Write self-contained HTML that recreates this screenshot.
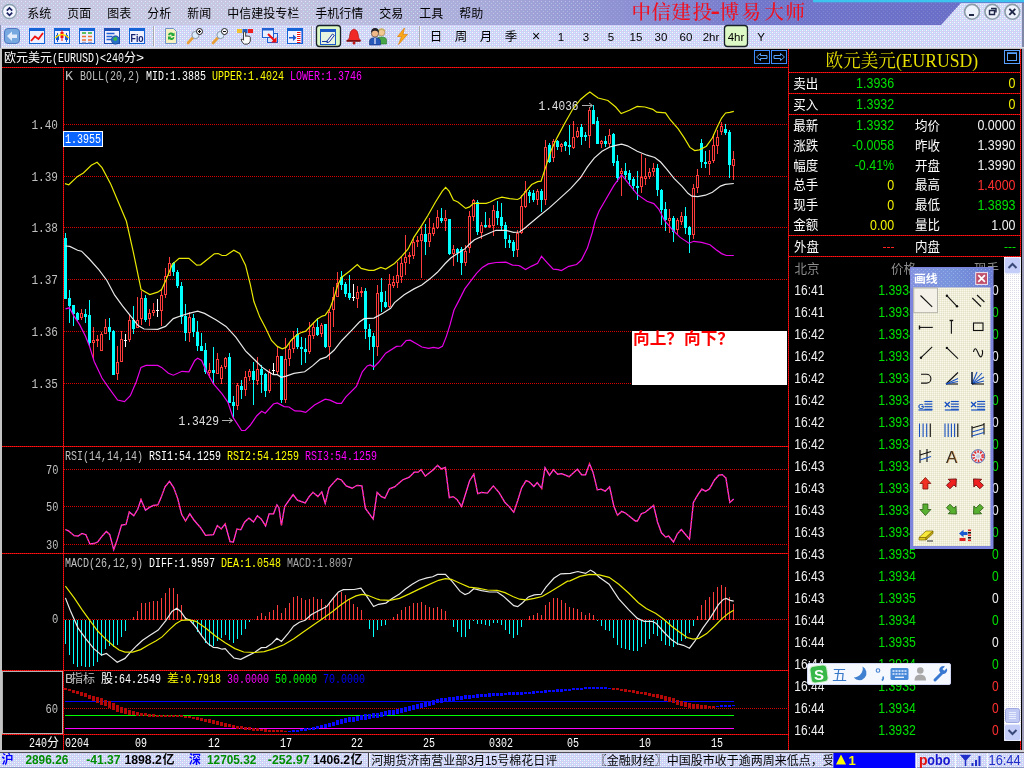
<!DOCTYPE html>
<html lang="zh-CN"><head><meta charset="utf-8"><title>中信建投-博易大师</title>
<style>
html,body{margin:0;padding:0;background:#000;overflow:hidden}
body{width:1024px;height:768px;position:relative}
svg{position:absolute;left:0;top:0;display:block;will-change:transform}
text{white-space:pre}
</style></head><body>
<svg width="1024" height="768" viewBox="0 0 1024 768">
<defs>
<linearGradient id="gt" x1="0" y1="0" x2="1" y2="0"><stop offset="0.26" stop-color="#c7c7e1"/><stop offset="0.5" stop-color="#a3a5d8"/><stop offset="0.74" stop-color="#7377cb"/><stop offset="1" stop-color="#676bc6"/></linearGradient>
<pattern id="dots4" width="4" height="4" patternUnits="userSpaceOnUse"><rect x="1" y="1" width="1" height="1" fill="#ffffff"/><rect x="3" y="3" width="1" height="1" fill="#c8ffff"/></pattern>
<pattern id="dots2" width="4" height="4" patternUnits="userSpaceOnUse"><rect x="0" y="0" width="1" height="1" fill="#ffffff"/><rect x="2" y="2" width="1" height="1" fill="#ffffff"/><rect x="2" y="0" width="1" height="1" fill="#c8ffff"/><rect x="0" y="2" width="1" height="1" fill="#c8ffff"/></pattern>
<pattern id="dotsw" width="2" height="2" patternUnits="userSpaceOnUse"><rect x="0" y="0" width="1" height="1" fill="#dcdce8"/></pattern>
<pattern id="dotsb" width="2" height="2" patternUnits="userSpaceOnUse"><rect x="0" y="0" width="1" height="1" fill="#ffffff"/><rect x="1" y="1" width="1" height="1" fill="#d8d4c0"/></pattern>
<linearGradient id="gtb" x1="0" y1="0" x2="1" y2="0"><stop offset="0" stop-color="#8492e0"/><stop offset="0.5" stop-color="#7894dc"/><stop offset="1" stop-color="#6c7cd4"/></linearGradient>
</defs>
<rect x="0" y="0" width="1024" height="25" fill="url(#gt)"/>
<rect x="0" y="0" width="430" height="25" fill="url(#dots4)" opacity="0.55"/>
<rect x="430" y="0" width="170" height="25" fill="url(#dots4)" opacity="0.35"/>
<rect x="600" y="0" width="424" height="25" fill="url(#dots4)" opacity="0.15"/>
<polygon points="941,25 961,3 1024,3 1024,25" fill="#d3d3f5"/>
<rect x="0" y="25" width="1024" height="23" fill="#d0d0f6"/>
<rect x="0" y="25" width="1024" height="23" fill="url(#dots2)" opacity="0.8"/>
<polygon points="941,25 961,3 1024,3 1024,25" fill="url(#dots2)" opacity="0.8"/>
<rect x="813" y="0" width="211" height="2.3" fill="#3cc4ee"/>
<rect x="1022" y="3" width="2" height="45" fill="#8088a8"/>
<rect x="0" y="47" width="1024" height="1" fill="#dcdce6"/>
<rect x="0" y="48" width="1024" height="1" fill="#c4c4c8"/>
<circle cx="9.5" cy="11.5" r="7" fill="#f4f6ff" stroke="#8aa0b0" stroke-width="1.3"/>
<path d="M6.8 10.6 L9.5 7.9 L12.2 10.6 M6.8 12.6 L9.5 15.3 L12.2 12.6" fill="none" stroke="#182060" stroke-width="1.7"/>
<rect x="0" y="25" width="1" height="23" fill="#8890b0"/>
<text x="27.3" y="17.5" fill="#000" font-size="12" font-family='"Liberation Sans","Noto Sans CJK SC",sans-serif' textLength="24" lengthAdjust="spacingAndGlyphs">系统</text>
<text x="67.3" y="17.5" fill="#000" font-size="12" font-family='"Liberation Sans","Noto Sans CJK SC",sans-serif' textLength="24" lengthAdjust="spacingAndGlyphs">页面</text>
<text x="107.3" y="17.5" fill="#000" font-size="12" font-family='"Liberation Sans","Noto Sans CJK SC",sans-serif' textLength="24" lengthAdjust="spacingAndGlyphs">图表</text>
<text x="147.3" y="17.5" fill="#000" font-size="12" font-family='"Liberation Sans","Noto Sans CJK SC",sans-serif' textLength="24" lengthAdjust="spacingAndGlyphs">分析</text>
<text x="187.3" y="17.5" fill="#000" font-size="12" font-family='"Liberation Sans","Noto Sans CJK SC",sans-serif' textLength="24" lengthAdjust="spacingAndGlyphs">新闻</text>
<text x="227.3" y="17.5" fill="#000" font-size="12" font-family='"Liberation Sans","Noto Sans CJK SC",sans-serif' textLength="72" lengthAdjust="spacingAndGlyphs">中信建投专栏</text>
<text x="315.3" y="17.5" fill="#000" font-size="12" font-family='"Liberation Sans","Noto Sans CJK SC",sans-serif' textLength="48" lengthAdjust="spacingAndGlyphs">手机行情</text>
<text x="379.3" y="17.5" fill="#000" font-size="12" font-family='"Liberation Sans","Noto Sans CJK SC",sans-serif' textLength="24" lengthAdjust="spacingAndGlyphs">交易</text>
<text x="419.3" y="17.5" fill="#000" font-size="12" font-family='"Liberation Sans","Noto Sans CJK SC",sans-serif' textLength="24" lengthAdjust="spacingAndGlyphs">工具</text>
<text x="459.3" y="17.5" fill="#000" font-size="12" font-family='"Liberation Sans","Noto Sans CJK SC",sans-serif' textLength="24" lengthAdjust="spacingAndGlyphs">帮助</text>
<text x="631.5" y="19.3" fill="#f01020" font-size="19.5" font-family='"Liberation Serif","Noto Serif CJK SC",serif' font-weight="500">中</text>
<text x="651.5" y="19.3" fill="#f01020" font-size="19.5" font-family='"Liberation Serif","Noto Serif CJK SC",serif' font-weight="500">信</text>
<text x="671.5" y="19.3" fill="#f01020" font-size="19.5" font-family='"Liberation Serif","Noto Serif CJK SC",serif' font-weight="500">建</text>
<text x="692.5" y="19.3" fill="#f01020" font-size="19.5" font-family='"Liberation Serif","Noto Serif CJK SC",serif' font-weight="500">投</text>
<text x="719.5" y="19.3" fill="#f01020" font-size="19.5" font-family='"Liberation Serif","Noto Serif CJK SC",serif' font-weight="500">博</text>
<text x="741.5" y="19.3" fill="#f01020" font-size="19.5" font-family='"Liberation Serif","Noto Serif CJK SC",serif' font-weight="500">易</text>
<text x="764.5" y="19.3" fill="#f01020" font-size="19.5" font-family='"Liberation Serif","Noto Serif CJK SC",serif' font-weight="500">大</text>
<text x="785.5" y="19.3" fill="#f01020" font-size="19.5" font-family='"Liberation Serif","Noto Serif CJK SC",serif' font-weight="500">师</text>
<text x="710.5" y="17.6" fill="#f01020" font-size="20" font-family='"Liberation Sans","Noto Sans CJK SC",sans-serif' font-weight="bold" textLength="9.5" lengthAdjust="spacingAndGlyphs">-</text>
<circle cx="972" cy="11.8" r="7.4" fill="#eef2fc" stroke="#8c9ca8" stroke-width="1.6"/>
<circle cx="992.3" cy="11.8" r="7.4" fill="#eef2fc" stroke="#8c9ca8" stroke-width="1.6"/>
<circle cx="1012.3" cy="11.8" r="7.4" fill="#eef2fc" stroke="#8c9ca8" stroke-width="1.6"/>
<rect x="969" y="14" width="5" height="2" fill="#202848"/>
<path d="M989.5 10.5h5v4h-5z M991 8.5h5v4" fill="none" stroke="#202848" stroke-width="1.4"/>
<path d="M1009.3 8.8l6 6M1015.3 8.8l-6 6" stroke="#202848" stroke-width="1.9"/>
<rect x="4.5" y="28.5" width="15" height="15" rx="3.5" fill="#78a8e0" stroke="#5078c0"/>
<path d="M7 36l5-4.5v3h5v3.5h-5v3z" fill="#e4ecfc"/>
<rect x="29.5" y="28.5" width="15" height="15" fill="#eef0ff" stroke="#1464d8"/>
<rect x="29" y="28" width="16" height="3" fill="#1464d8"/>
<polyline points="31,41 35,36.5 38.5,39 43,33" fill="none" stroke="#f01010" stroke-width="1.8"/>
<rect x="54.5" y="28.5" width="15" height="15" fill="#eef0ff" stroke="#1464d8"/>
<rect x="54" y="28" width="16" height="3" fill="#1464d8"/>
<path d="M57.5 33v9M66.5 33v9" stroke="#1858d0" stroke-width="1"/><rect x="56" y="35" width="3" height="5" fill="#1858d0"/><rect x="65" y="35" width="3" height="5" fill="#1858d0"/>
<path d="M62 30v11" stroke="#f01010"/><rect x="60.5" y="32" width="3" height="6" fill="#f01010"/>
<path d="M55 38q7-7 14 0" fill="none" stroke="#f8e000" stroke-width="1.2"/>
<rect x="79.5" y="28.5" width="15" height="15" fill="#eef0ff" stroke="#1464d8"/>
<rect x="79" y="28" width="16" height="3" fill="#1464d8"/>
<path d="M82 33h4M88 33h4" stroke="#30b030" stroke-width="1.3"/>
<path d="M82 36.5h4M88 36.5h4" stroke="#f07030" stroke-width="1.3"/>
<path d="M82 40h4M88 40h4" stroke="#f07030" stroke-width="1.3"/>
<path d="M82 42.5h4M88 42.5h4" stroke="#a0a0c0" stroke-width="1.3"/>
<rect x="104.5" y="28.5" width="15" height="15" fill="#f0f0ff" stroke="#1a50b8"/>
<rect x="104" y="28" width="16" height="3" fill="#1a50b8"/>
<path d="M106.5 33.5h8M106.5 36.5h6M106.5 39.5h5" stroke="#2060d0" stroke-width="1.6"/>
<circle cx="115.5" cy="40" r="4.2" fill="#2870c8" stroke="#103880" stroke-width="0.6"/><path d="M113 39q2-3 4-1.5q1 2-1 3.5q-2 0.5-3-2z" fill="#38b848"/>
<rect x="129.5" y="28.5" width="15" height="15" fill="#eef0ff" stroke="#1464d8"/>
<rect x="129" y="28" width="16" height="3" fill="#1464d8"/>
<text x="130.6" y="41.5" fill="#102070" font-size="10" font-family='"Liberation Sans","Noto Sans CJK SC",sans-serif' font-weight="bold" textLength="13" lengthAdjust="spacingAndGlyphs">Fio</text>
<line x1="153.5" y1="26" x2="153.5" y2="46" stroke="#a8a8b0" stroke-width="1" shape-rendering="crispEdges"/>
<line x1="154.5" y1="26" x2="154.5" y2="46" stroke="#f8f8ff" stroke-width="1" shape-rendering="crispEdges"/>
<path d="M165.5 28.5h8l3 3v12h-11z" fill="#f4f0c0" stroke="#7090c8"/>
<path d="M168 35a3.2 3.2 0 0 1 5.5-1.5l1-1v3.5h-3.5l1-1a1.8 1.8 0 0 0-2.6 0.6zM174.5 37.5a3.2 3.2 0 0 1-5.5 1.5l-1 1v-3.5h3.5l-1 1a1.8 1.8 0 0 0 2.6-0.6z" fill="#20a838"/>
<path d="M188 43l5.5-6" stroke="#e8a038" stroke-width="2.6" stroke-linecap="round"/>
<circle cx="195.5" cy="35" r="3.6" fill="#dcecff" stroke="#8898a8" stroke-width="1"/>
<circle cx="199.5" cy="31.5" r="3" fill="#f8f8ff" stroke="#202020" stroke-width="1"/>
<path d="M198 31.5h3M199.5 30v3" stroke="#101010" stroke-width="1"/>
<path d="M213 43l5.5-6" stroke="#e8a038" stroke-width="2.6" stroke-linecap="round"/>
<circle cx="220.5" cy="35" r="3.6" fill="#dcecff" stroke="#8898a8" stroke-width="1"/>
<circle cx="224.5" cy="31.5" r="3" fill="#f8f8ff" stroke="#202020" stroke-width="1"/>
<path d="M223 31.5h3" stroke="#101010" stroke-width="1"/>
<rect x="237" y="29" width="5" height="4" fill="#f0c030"/><rect x="242.5" y="29" width="5" height="4" fill="#2060c0"/><rect x="248" y="29" width="5" height="4" fill="#f02020"/>
<path d="M243.5 32.5q1.2-1.5 2.2 0v4l1.2-0.6 1.2 0.4 1.2-0.2 1 1v4q-0.5 2.5-3 3h-3q-2-1-3.3-4.5l1.3-0.6 1.2 1.2z" fill="#fcfcfc" stroke="#282828" stroke-width="0.9"/>
<rect x="267.5" y="33.5" width="10" height="9" fill="#d8e4fc" stroke="#2060d0"/>
<rect x="262.5" y="28.5" width="11" height="9" fill="#e8f0ff" stroke="#2060d0"/><rect x="262" y="28" width="12" height="2.5" fill="#2060d0"/>
<path d="M268 34l6.5 6.5" stroke="#f01010" stroke-width="2"/><path d="M276.5 42.5h-5.5l5.5-5.5z" fill="#f01010"/>
<rect x="287.5" y="28.5" width="15" height="15" fill="#eef0ff" stroke="#1464d8"/>
<rect x="287" y="28" width="16" height="3" fill="#1464d8"/>
<rect x="296.5" y="31" width="4" height="12" fill="#fff"/><path d="M301.5 31.5v11.5" stroke="#2040e0" stroke-dasharray="1 1"/>
<path d="M297 32.5h3.5M297 34.5h3.5M297 36.5h3.5M297 38.5h3.5M297 40.5h3.5M297 42.5h3.5" stroke="#f01010" stroke-width="1"/>
<path d="M289 37h4v-2.5l3.5 3.2-3.5 3.2v-2.5h-4z" fill="#1858d0"/>
<line x1="311.5" y1="26" x2="311.5" y2="46" stroke="#a8a8b0" stroke-width="1" shape-rendering="crispEdges"/>
<line x1="312.5" y1="26" x2="312.5" y2="46" stroke="#f8f8ff" stroke-width="1" shape-rendering="crispEdges"/>
<rect x="316.5" y="25.5" width="24" height="21" rx="3" fill="#dcf8c4" stroke="#182028" stroke-width="1.3"/>
<rect x="320.5" y="29.5" width="15" height="15" fill="#e8f4e0" stroke="#1a58c8"/>
<rect x="320.0" y="29" width="16" height="3" fill="#1a58c8"/>
<path d="M322 41.5h4.5l1.5-1" fill="none" stroke="#1838a0" stroke-width="1.2"/><path d="M327.5 40.5l5-6.5 1.8 1.4-5 6.5-2.4 0.8z" fill="#f8f8ff" stroke="#1838a0" stroke-width="1"/>
<path d="M353 29.5q1-1.2 2 0q3 1 3.3 5.5l0.4 3 2 2.5h-13.4l2-2.5 0.4-3q0.3-4.5 3.3-5.5z" fill="#f02828" stroke="#a01010" stroke-width="0.6"/><rect x="346.5" y="40" width="14" height="1.8" fill="#801010"/><circle cx="354" cy="43" r="1.5" fill="#c01818"/>
<circle cx="381.5" cy="32.5" r="3.4" fill="#f0c890" stroke="#a08050" stroke-width="0.6"/><path d="M376.5 44v-4q0-3 5-3t5 3v4z" fill="#48a848" stroke="#287028" stroke-width="0.6"/><path d="M378 31q3.5-4 7 0" fill="none" stroke="#c8b060" stroke-width="1.6"/>
<circle cx="375" cy="33.5" r="3.6" fill="#f0b888" stroke="#303030" stroke-width="0.6"/><path d="M371 33q0-5 4-5t4 5q-1-2.5-4-2.5t-4 2.5z" fill="#202028"/><path d="M369.5 45v-4q0-3.2 5.5-3.2t5.5 3.2v4z" fill="#2858b8" stroke="#183878" stroke-width="0.6"/><path d="M375 38v6" stroke="#f0f0ff" stroke-width="1.2"/>
<path d="M404.5 28l-7 8.5h4l-3 8 9-10h-4.5z" fill="#f8a818" stroke="#e08008" stroke-width="0.7"/>
<line x1="419.5" y1="26" x2="419.5" y2="46" stroke="#a8a8b0" stroke-width="1" shape-rendering="crispEdges"/>
<line x1="420.5" y1="26" x2="420.5" y2="46" stroke="#f8f8ff" stroke-width="1" shape-rendering="crispEdges"/>
<rect x="724.5" y="25.5" width="23" height="21" rx="3" fill="#dcf8c4" stroke="#182028" stroke-width="1.3"/>
<text x="436" y="41" fill="#000" font-size="12.5" font-family='"Liberation Sans","Noto Sans CJK SC",sans-serif' text-anchor="middle">日</text>
<text x="461" y="41" fill="#000" font-size="12.5" font-family='"Liberation Sans","Noto Sans CJK SC",sans-serif' text-anchor="middle">周</text>
<text x="486" y="41" fill="#000" font-size="12.5" font-family='"Liberation Sans","Noto Sans CJK SC",sans-serif' text-anchor="middle">月</text>
<text x="511" y="41" fill="#000" font-size="12.5" font-family='"Liberation Sans","Noto Sans CJK SC",sans-serif' text-anchor="middle">季</text>
<text x="536" y="41" fill="#000" font-size="14" font-family='"Liberation Sans","Noto Sans CJK SC",sans-serif' text-anchor="middle">×</text>
<text x="561" y="40.5" fill="#000" font-size="11.5" font-family='"Liberation Sans","Noto Sans CJK SC",sans-serif' text-anchor="middle">1</text>
<text x="586" y="40.5" fill="#000" font-size="11.5" font-family='"Liberation Sans","Noto Sans CJK SC",sans-serif' text-anchor="middle">3</text>
<text x="611" y="40.5" fill="#000" font-size="11.5" font-family='"Liberation Sans","Noto Sans CJK SC",sans-serif' text-anchor="middle">5</text>
<text x="636" y="40.5" fill="#000" font-size="11.5" font-family='"Liberation Sans","Noto Sans CJK SC",sans-serif' text-anchor="middle">15</text>
<text x="661" y="40.5" fill="#000" font-size="11.5" font-family='"Liberation Sans","Noto Sans CJK SC",sans-serif' text-anchor="middle">30</text>
<text x="686" y="40.5" fill="#000" font-size="11.5" font-family='"Liberation Sans","Noto Sans CJK SC",sans-serif' text-anchor="middle">60</text>
<text x="711" y="40.5" fill="#000" font-size="11.5" font-family='"Liberation Sans","Noto Sans CJK SC",sans-serif' text-anchor="middle">2hr</text>
<text x="736" y="40.5" fill="#000" font-size="11.5" font-family='"Liberation Sans","Noto Sans CJK SC",sans-serif' text-anchor="middle">4hr</text>
<text x="761" y="40.5" fill="#000" font-size="11.5" font-family='"Liberation Sans","Noto Sans CJK SC",sans-serif' text-anchor="middle">Y</text>
<rect x="0" y="49" width="1024" height="701" fill="#000"/>
<rect x="0" y="49" width="2" height="701" fill="#c4c4c4"/>
<text x="4" y="62" fill="#fff" font-size="12" font-family='"Liberation Sans","Noto Sans CJK SC",sans-serif' textLength="48" lengthAdjust="spacingAndGlyphs">欧元美元</text>
<text x="52" y="62" fill="#fff" font-size="13.5" font-family='"Liberation Mono","Noto Sans CJK SC",monospace' textLength="72" lengthAdjust="spacingAndGlyphs">(EURUSD)&lt;240</text>
<text x="124" y="62" fill="#fff" font-size="12" font-family='"Liberation Sans","Noto Sans CJK SC",sans-serif'>分</text>
<text x="136" y="62" fill="#fff" font-size="13.5" font-family='"Liberation Mono","Noto Sans CJK SC",monospace'>&gt;</text>
<rect x="754.5" y="50.5" width="15" height="13" fill="none" stroke="#3c8cff" shape-rendering="crispEdges"/>
<path d="M756.5 57l4-3.5v2h6.5v3h-6.5v2z" fill="none" stroke="#58a4ff" stroke-width="1"/>
<rect x="771.5" y="50.5" width="15" height="13" fill="none" stroke="#3c8cff" shape-rendering="crispEdges"/>
<path d="M784.5 57l-4-3.5v2h-6.5v3h6.5v2z" fill="none" stroke="#58a4ff" stroke-width="1"/>
<line x1="2" y1="67.5" x2="789" y2="67.5" stroke="#c40000" stroke-width="1" shape-rendering="crispEdges"/>
<line x1="2" y1="446.5" x2="789" y2="446.5" stroke="#c40000" stroke-width="1" shape-rendering="crispEdges"/>
<line x1="2" y1="553.5" x2="789" y2="553.5" stroke="#c40000" stroke-width="1" shape-rendering="crispEdges"/>
<line x1="2" y1="670.5" x2="789" y2="670.5" stroke="#c40000" stroke-width="1" shape-rendering="crispEdges"/>
<line x1="2" y1="734.5" x2="789" y2="734.5" stroke="#c40000" stroke-width="1" shape-rendering="crispEdges"/>
<line x1="63.5" y1="67" x2="63.5" y2="750" stroke="#c40000" stroke-width="1" shape-rendering="crispEdges"/>
<line x1="788.5" y1="49" x2="788.5" y2="750" stroke="#c40000" stroke-width="1" shape-rendering="crispEdges"/>
<line x1="2" y1="67.5" x2="789" y2="67.5" stroke="#ff1818" stroke-width="1" stroke-dasharray="1 1" shape-rendering="crispEdges"/>
<line x1="2" y1="446.5" x2="789" y2="446.5" stroke="#ff1818" stroke-width="1" stroke-dasharray="1 1" shape-rendering="crispEdges"/>
<line x1="2" y1="553.5" x2="789" y2="553.5" stroke="#ff1818" stroke-width="1" stroke-dasharray="1 1" shape-rendering="crispEdges"/>
<line x1="2" y1="670.5" x2="789" y2="670.5" stroke="#ff1818" stroke-width="1" stroke-dasharray="1 1" shape-rendering="crispEdges"/>
<line x1="2" y1="734.5" x2="789" y2="734.5" stroke="#ff1818" stroke-width="1" stroke-dasharray="1 1" shape-rendering="crispEdges"/>
<line x1="63.5" y1="67" x2="63.5" y2="750" stroke="#ff1818" stroke-width="1" stroke-dasharray="1 1" shape-rendering="crispEdges"/>
<line x1="788.5" y1="49" x2="788.5" y2="750" stroke="#ff1818" stroke-width="1" stroke-dasharray="1 1" shape-rendering="crispEdges"/>
<line x1="64" y1="124.5" x2="788" y2="124.5" stroke="#d80000" stroke-width="1" stroke-dasharray="1 1" shape-rendering="crispEdges"/>
<line x1="64" y1="176.5" x2="788" y2="176.5" stroke="#d80000" stroke-width="1" stroke-dasharray="1 1" shape-rendering="crispEdges"/>
<line x1="64" y1="227.5" x2="788" y2="227.5" stroke="#d80000" stroke-width="1" stroke-dasharray="1 1" shape-rendering="crispEdges"/>
<line x1="64" y1="279.5" x2="788" y2="279.5" stroke="#d80000" stroke-width="1" stroke-dasharray="1 1" shape-rendering="crispEdges"/>
<line x1="64" y1="331.5" x2="788" y2="331.5" stroke="#d80000" stroke-width="1" stroke-dasharray="1 1" shape-rendering="crispEdges"/>
<line x1="64" y1="383.5" x2="788" y2="383.5" stroke="#d80000" stroke-width="1" stroke-dasharray="1 1" shape-rendering="crispEdges"/>
<line x1="64" y1="469.5" x2="788" y2="469.5" stroke="#d80000" stroke-width="1" stroke-dasharray="1 1" shape-rendering="crispEdges"/>
<line x1="64" y1="506.5" x2="788" y2="506.5" stroke="#d80000" stroke-width="1" stroke-dasharray="1 1" shape-rendering="crispEdges"/>
<line x1="64" y1="544.5" x2="788" y2="544.5" stroke="#d80000" stroke-width="1" stroke-dasharray="1 1" shape-rendering="crispEdges"/>
<line x1="64" y1="619.5" x2="788" y2="619.5" stroke="#d80000" stroke-width="1" stroke-dasharray="1 1" shape-rendering="crispEdges"/>
<line x1="64" y1="708.5" x2="788" y2="708.5" stroke="#d80000" stroke-width="1" stroke-dasharray="1 1" shape-rendering="crispEdges"/>
<text x="31.5" y="129" fill="#c0c0c0" font-size="13" font-family='"Liberation Mono","Noto Sans CJK SC",monospace' textLength="26.5" lengthAdjust="spacingAndGlyphs">1.40</text>
<text x="31.5" y="181" fill="#c0c0c0" font-size="13" font-family='"Liberation Mono","Noto Sans CJK SC",monospace' textLength="26.5" lengthAdjust="spacingAndGlyphs">1.39</text>
<text x="31.5" y="232" fill="#c0c0c0" font-size="13" font-family='"Liberation Mono","Noto Sans CJK SC",monospace' textLength="26.5" lengthAdjust="spacingAndGlyphs">1.38</text>
<text x="31.5" y="284" fill="#c0c0c0" font-size="13" font-family='"Liberation Mono","Noto Sans CJK SC",monospace' textLength="26.5" lengthAdjust="spacingAndGlyphs">1.37</text>
<text x="31.5" y="336" fill="#c0c0c0" font-size="13" font-family='"Liberation Mono","Noto Sans CJK SC",monospace' textLength="26.5" lengthAdjust="spacingAndGlyphs">1.36</text>
<text x="31.5" y="388" fill="#c0c0c0" font-size="13" font-family='"Liberation Mono","Noto Sans CJK SC",monospace' textLength="26.5" lengthAdjust="spacingAndGlyphs">1.35</text>
<text x="46" y="473.6" fill="#c0c0c0" font-size="13.5" font-family='"Liberation Mono","Noto Sans CJK SC",monospace' textLength="12.4" lengthAdjust="spacingAndGlyphs">70</text>
<text x="46" y="510.7" fill="#c0c0c0" font-size="13.5" font-family='"Liberation Mono","Noto Sans CJK SC",monospace' textLength="12.4" lengthAdjust="spacingAndGlyphs">50</text>
<text x="46" y="548.8" fill="#c0c0c0" font-size="13.5" font-family='"Liberation Mono","Noto Sans CJK SC",monospace' textLength="12.4" lengthAdjust="spacingAndGlyphs">30</text>
<text transform="translate(52,623.4) scale(0.78,1)" fill="#c0c0c0" font-size="13.5" font-family='"Liberation Mono","Noto Sans CJK SC",monospace'>0</text>
<text x="45.5" y="712.6" fill="#c0c0c0" font-size="13.5" font-family='"Liberation Mono","Noto Sans CJK SC",monospace' textLength="12.6" lengthAdjust="spacingAndGlyphs">60</text>
<text x="65" y="80" fill="#c0c0c0" font-size="13.5" font-family='"Liberation Mono","Noto Sans CJK SC",monospace'>K</text>
<text x="80" y="80" fill="#c0c0c0" font-size="13.5" font-family='"Liberation Mono","Noto Sans CJK SC",monospace' textLength="60" lengthAdjust="spacingAndGlyphs">BOLL(20,2)</text>
<text x="146" y="80" fill="#fff" font-size="13.5" font-family='"Liberation Mono","Noto Sans CJK SC",monospace' textLength="60" lengthAdjust="spacingAndGlyphs">MID:1.3885</text>
<text x="212" y="80" fill="#ffff00" font-size="13.5" font-family='"Liberation Mono","Noto Sans CJK SC",monospace' textLength="72" lengthAdjust="spacingAndGlyphs">UPPER:1.4024</text>
<text x="290" y="80" fill="#ff00ff" font-size="13.5" font-family='"Liberation Mono","Noto Sans CJK SC",monospace' textLength="72" lengthAdjust="spacingAndGlyphs">LOWER:1.3746</text>
<text x="65" y="459.5" fill="#c0c0c0" font-size="13.5" font-family='"Liberation Mono","Noto Sans CJK SC",monospace' textLength="78" lengthAdjust="spacingAndGlyphs">RSI(14,14,14)</text>
<text x="149" y="459.5" fill="#fff" font-size="13.5" font-family='"Liberation Mono","Noto Sans CJK SC",monospace' textLength="72" lengthAdjust="spacingAndGlyphs">RSI1:54.1259</text>
<text x="227" y="459.5" fill="#ffff00" font-size="13.5" font-family='"Liberation Mono","Noto Sans CJK SC",monospace' textLength="72" lengthAdjust="spacingAndGlyphs">RSI2:54.1259</text>
<text x="305" y="459.5" fill="#ff00ff" font-size="13.5" font-family='"Liberation Mono","Noto Sans CJK SC",monospace' textLength="72" lengthAdjust="spacingAndGlyphs">RSI3:54.1259</text>
<text x="65" y="566.5" fill="#c0c0c0" font-size="13.5" font-family='"Liberation Mono","Noto Sans CJK SC",monospace' textLength="78" lengthAdjust="spacingAndGlyphs">MACD(26,12,9)</text>
<text x="149" y="566.5" fill="#fff" font-size="13.5" font-family='"Liberation Mono","Noto Sans CJK SC",monospace' textLength="66" lengthAdjust="spacingAndGlyphs">DIFF:1.9597</text>
<text x="221" y="566.5" fill="#ffff00" font-size="13.5" font-family='"Liberation Mono","Noto Sans CJK SC",monospace' textLength="60" lengthAdjust="spacingAndGlyphs">DEA:1.0548</text>
<text x="287" y="566.5" fill="#a8a8a8" font-size="13.5" font-family='"Liberation Mono","Noto Sans CJK SC",monospace' textLength="66" lengthAdjust="spacingAndGlyphs">MACD:1.8097</text>
<text x="65" y="683" fill="#c0c0c0" font-size="13.5" font-family='"Liberation Mono","Noto Sans CJK SC",monospace'>B</text>
<text x="71" y="683" fill="#c0c0c0" font-size="12" font-family='"Liberation Sans","Noto Sans CJK SC",sans-serif' textLength="24" lengthAdjust="spacingAndGlyphs">指标</text>
<text x="101" y="683" fill="#fff" font-size="12" font-family='"Liberation Sans","Noto Sans CJK SC",sans-serif'>股</text>
<text x="113" y="683" fill="#fff" font-size="13.5" font-family='"Liberation Mono","Noto Sans CJK SC",monospace' textLength="48" lengthAdjust="spacingAndGlyphs">:64.2549</text>
<text x="167" y="683" fill="#ffff00" font-size="12" font-family='"Liberation Sans","Noto Sans CJK SC",sans-serif'>差</text>
<text x="179" y="683" fill="#ffff00" font-size="13.5" font-family='"Liberation Mono","Noto Sans CJK SC",monospace' textLength="42" lengthAdjust="spacingAndGlyphs">:0.7918</text>
<text x="227" y="683" fill="#ff00ff" font-size="13.5" font-family='"Liberation Mono","Noto Sans CJK SC",monospace' textLength="42" lengthAdjust="spacingAndGlyphs">30.0000</text>
<text x="275" y="683" fill="#00ff00" font-size="13.5" font-family='"Liberation Mono","Noto Sans CJK SC",monospace' textLength="42" lengthAdjust="spacingAndGlyphs">50.0000</text>
<text x="323" y="683" fill="#0000ff" font-size="13.5" font-family='"Liberation Mono","Noto Sans CJK SC",monospace' textLength="42" lengthAdjust="spacingAndGlyphs">70.0000</text>
<rect x="63.5" y="131.5" width="39" height="15" fill="#0a64ff" stroke="#ffffff" stroke-width="1" shape-rendering="crispEdges"/>
<text x="65" y="143.2" fill="#fff" font-size="13.5" font-family='"Liberation Mono","Noto Sans CJK SC",monospace' textLength="36" lengthAdjust="spacingAndGlyphs">1.3955</text>
<g shape-rendering="crispEdges">
<line x1="65.5" y1="233.3" x2="65.5" y2="299.0" stroke="#00ffff"/>
<rect x="64" y="238.0" width="3" height="61.0" fill="#00ffff"/>
<line x1="69.5" y1="290.3" x2="69.5" y2="322.5" stroke="#00ffff"/>
<rect x="68" y="298.0" width="3" height="8.0" fill="#00ffff"/>
<line x1="73.5" y1="305.0" x2="73.5" y2="326.4" stroke="#00ffff"/>
<rect x="72" y="305.0" width="3" height="8.8" fill="#00ffff"/>
<line x1="77.5" y1="311.8" x2="77.5" y2="321.6" stroke="#00ffff"/>
<rect x="76" y="312.8" width="3" height="6.8" fill="#00ffff"/>
<line x1="81.5" y1="308.9" x2="81.5" y2="319.6" stroke="#ff3c3c"/>
<rect x="80.5" y="313.9" width="2" height="3.3" fill="#000" stroke="#ff3c3c"/>
<line x1="85.5" y1="308.9" x2="85.5" y2="322.5" stroke="#00ffff"/>
<rect x="84" y="313.8" width="3" height="2.9" fill="#00ffff"/>
<line x1="89.5" y1="300.0" x2="89.5" y2="347.0" stroke="#00ffff"/>
<rect x="88" y="315.0" width="3" height="27.7" fill="#00ffff"/>
<line x1="93.5" y1="327.0" x2="93.5" y2="358.7" stroke="#ff3c3c"/>
<rect x="92.5" y="340.5" width="2" height="1.7" fill="#000" stroke="#ff3c3c"/>
<line x1="97.5" y1="335.0" x2="97.5" y2="347.0" stroke="#ff3c3c"/>
<rect x="96.5" y="339.3" width="2" height="1.2" fill="#000" stroke="#ff3c3c"/>
<line x1="101.5" y1="331.7" x2="101.5" y2="351.3" stroke="#ff3c3c"/>
<rect x="100.5" y="334.8" width="2" height="16.0" fill="#000" stroke="#ff3c3c"/>
<line x1="105.5" y1="319.2" x2="105.5" y2="334.3" stroke="#ff3c3c"/>
<rect x="104.5" y="327.5" width="2" height="6.3" fill="#000" stroke="#ff3c3c"/>
<line x1="109.5" y1="318.2" x2="109.5" y2="340.0" stroke="#00ffff"/>
<rect x="108" y="327.0" width="3" height="4.7" fill="#00ffff"/>
<line x1="113.5" y1="330.4" x2="113.5" y2="375.2" stroke="#00ffff"/>
<rect x="112" y="331.0" width="3" height="44.2" fill="#00ffff"/>
<line x1="117.5" y1="345.9" x2="117.5" y2="379.7" stroke="#ff3c3c"/>
<rect x="116.5" y="362.0" width="2" height="11.7" fill="#000" stroke="#ff3c3c"/>
<line x1="121.5" y1="331.0" x2="121.5" y2="361.5" stroke="#ff3c3c"/>
<rect x="120.5" y="339.5" width="2" height="21.5" fill="#000" stroke="#ff3c3c"/>
<line x1="125.5" y1="334.3" x2="125.5" y2="346.6" stroke="#fff"/>
<line x1="124" y1="340.0" x2="127" y2="340.0" stroke="#fff"/>
<line x1="129.5" y1="313.8" x2="129.5" y2="341.5" stroke="#ff3c3c"/>
<rect x="128.5" y="320.1" width="2" height="19.4" fill="#000" stroke="#ff3c3c"/>
<line x1="133.5" y1="306.0" x2="133.5" y2="334.3" stroke="#00ffff"/>
<rect x="132" y="319.6" width="3" height="9.4" fill="#00ffff"/>
<line x1="137.5" y1="297.0" x2="137.5" y2="328.4" stroke="#ff3c3c"/>
<rect x="136.5" y="320.1" width="2" height="7.8" fill="#000" stroke="#ff3c3c"/>
<line x1="141.5" y1="290.7" x2="141.5" y2="324.5" stroke="#ff3c3c"/>
<rect x="140.5" y="298.5" width="2" height="19.6" fill="#000" stroke="#ff3c3c"/>
<line x1="145.5" y1="295.0" x2="145.5" y2="321.6" stroke="#00ffff"/>
<rect x="144" y="297.7" width="3" height="21.9" fill="#00ffff"/>
<line x1="149.5" y1="308.9" x2="149.5" y2="325.5" stroke="#ff3c3c"/>
<rect x="148.5" y="313.9" width="2" height="4.2" fill="#000" stroke="#ff3c3c"/>
<line x1="153.5" y1="303.0" x2="153.5" y2="315.7" stroke="#ff3c3c"/>
<rect x="152.5" y="310.0" width="2" height="2.3" fill="#000" stroke="#ff3c3c"/>
<line x1="157.5" y1="299.0" x2="157.5" y2="316.7" stroke="#fff"/>
<line x1="156" y1="310.2" x2="159" y2="310.2" stroke="#fff"/>
<line x1="161.5" y1="290.3" x2="161.5" y2="325.5" stroke="#ff3c3c"/>
<rect x="160.5" y="295.7" width="2" height="14.6" fill="#000" stroke="#ff3c3c"/>
<line x1="165.5" y1="267.9" x2="165.5" y2="298.0" stroke="#ff3c3c"/>
<rect x="164.5" y="276.8" width="2" height="17.9" fill="#000" stroke="#ff3c3c"/>
<line x1="169.5" y1="257.0" x2="169.5" y2="276.3" stroke="#ff3c3c"/>
<rect x="168.5" y="263.9" width="2" height="11.9" fill="#000" stroke="#ff3c3c"/>
<line x1="173.5" y1="262.0" x2="173.5" y2="275.7" stroke="#00ffff"/>
<rect x="172" y="262.6" width="3" height="9.2" fill="#00ffff"/>
<line x1="177.5" y1="269.8" x2="177.5" y2="288.4" stroke="#00ffff"/>
<rect x="176" y="271.8" width="3" height="14.2" fill="#00ffff"/>
<line x1="181.5" y1="281.5" x2="181.5" y2="323.5" stroke="#00ffff"/>
<rect x="180" y="286.0" width="3" height="30.7" fill="#00ffff"/>
<line x1="185.5" y1="304.0" x2="185.5" y2="341.0" stroke="#00ffff"/>
<rect x="184" y="315.7" width="3" height="17.3" fill="#00ffff"/>
<line x1="189.5" y1="311.8" x2="189.5" y2="342.0" stroke="#ff3c3c"/>
<rect x="188.5" y="317.2" width="2" height="15.6" fill="#000" stroke="#ff3c3c"/>
<line x1="193.5" y1="313.8" x2="193.5" y2="337.2" stroke="#00ffff"/>
<rect x="192" y="317.7" width="3" height="14.0" fill="#00ffff"/>
<line x1="197.5" y1="321.2" x2="197.5" y2="351.3" stroke="#00ffff"/>
<rect x="196" y="331.7" width="3" height="14.3" fill="#00ffff"/>
<line x1="201.5" y1="333.3" x2="201.5" y2="351.3" stroke="#00ffff"/>
<rect x="200" y="346.0" width="3" height="5.3" fill="#00ffff"/>
<line x1="205.5" y1="343.4" x2="205.5" y2="374.0" stroke="#00ffff"/>
<rect x="204" y="350.4" width="3" height="21.9" fill="#00ffff"/>
<line x1="209.5" y1="362.5" x2="209.5" y2="378.0" stroke="#ff3c3c"/>
<rect x="208.5" y="370.8" width="2" height="1.4" fill="#000" stroke="#ff3c3c"/>
<line x1="213.5" y1="347.3" x2="213.5" y2="383.6" stroke="#00ffff"/>
<rect x="212" y="370.3" width="3" height="2.4" fill="#00ffff"/>
<line x1="217.5" y1="352.7" x2="217.5" y2="374.2" stroke="#ff3c3c"/>
<rect x="216.5" y="359.5" width="2" height="14.2" fill="#000" stroke="#ff3c3c"/>
<line x1="221.5" y1="364.5" x2="221.5" y2="383.6" stroke="#ff3c3c"/>
<rect x="220.5" y="367.3" width="2" height="11.2" fill="#000" stroke="#ff3c3c"/>
<line x1="225.5" y1="356.6" x2="225.5" y2="369.3" stroke="#ff3c3c"/>
<rect x="224.5" y="358.7" width="2" height="8.2" fill="#000" stroke="#ff3c3c"/>
<line x1="229.5" y1="352.7" x2="229.5" y2="403.0" stroke="#00ffff"/>
<rect x="228" y="357.0" width="3" height="46.0" fill="#00ffff"/>
<line x1="233.5" y1="395.7" x2="233.5" y2="419.0" stroke="#00ffff"/>
<rect x="232" y="401.5" width="3" height="4.9" fill="#00ffff"/>
<line x1="237.5" y1="383.0" x2="237.5" y2="409.8" stroke="#ff3c3c"/>
<rect x="236.5" y="385.5" width="2" height="19.5" fill="#000" stroke="#ff3c3c"/>
<line x1="241.5" y1="380.0" x2="241.5" y2="399.0" stroke="#00ffff"/>
<rect x="240" y="386.0" width="3" height="3.8" fill="#00ffff"/>
<line x1="245.5" y1="371.3" x2="245.5" y2="395.7" stroke="#ff3c3c"/>
<rect x="244.5" y="377.1" width="2" height="12.6" fill="#000" stroke="#ff3c3c"/>
<line x1="249.5" y1="368.8" x2="249.5" y2="381.0" stroke="#ff3c3c"/>
<rect x="248.5" y="371.8" width="2" height="4.8" fill="#000" stroke="#ff3c3c"/>
<line x1="253.5" y1="362.0" x2="253.5" y2="404.8" stroke="#00ffff"/>
<rect x="252" y="371.0" width="3" height="8.7" fill="#00ffff"/>
<line x1="257.5" y1="357.0" x2="257.5" y2="384.7" stroke="#ff3c3c"/>
<rect x="256.5" y="369.3" width="2" height="11.2" fill="#000" stroke="#ff3c3c"/>
<line x1="261.5" y1="365.0" x2="261.5" y2="393.3" stroke="#00ffff"/>
<rect x="260" y="368.9" width="3" height="6.4" fill="#00ffff"/>
<line x1="265.5" y1="372.8" x2="265.5" y2="397.2" stroke="#00ffff"/>
<rect x="264" y="373.8" width="3" height="17.6" fill="#00ffff"/>
<line x1="269.5" y1="368.9" x2="269.5" y2="392.9" stroke="#ff3c3c"/>
<rect x="268.5" y="372.3" width="2" height="18.5" fill="#000" stroke="#ff3c3c"/>
<line x1="273.5" y1="363.0" x2="273.5" y2="373.8" stroke="#fff"/>
<line x1="272" y1="370.8" x2="275" y2="370.8" stroke="#fff"/>
<line x1="277.5" y1="347.4" x2="277.5" y2="373.8" stroke="#ff3c3c"/>
<rect x="276.5" y="356.7" width="2" height="14.6" fill="#000" stroke="#ff3c3c"/>
<line x1="281.5" y1="355.8" x2="281.5" y2="403.0" stroke="#00ffff"/>
<rect x="280" y="356.2" width="3" height="43.3" fill="#00ffff"/>
<line x1="285.5" y1="338.2" x2="285.5" y2="402.7" stroke="#ff3c3c"/>
<rect x="284.5" y="359.6" width="2" height="39.4" fill="#000" stroke="#ff3c3c"/>
<line x1="289.5" y1="342.5" x2="289.5" y2="366.0" stroke="#ff3c3c"/>
<rect x="288.5" y="349.8" width="2" height="8.8" fill="#000" stroke="#ff3c3c"/>
<line x1="293.5" y1="331.2" x2="293.5" y2="352.7" stroke="#ff3c3c"/>
<rect x="292.5" y="338.1" width="2" height="10.1" fill="#000" stroke="#ff3c3c"/>
<line x1="297.5" y1="327.9" x2="297.5" y2="349.3" stroke="#00ffff"/>
<rect x="296" y="333.7" width="3" height="13.7" fill="#00ffff"/>
<line x1="301.5" y1="337.0" x2="301.5" y2="365.0" stroke="#00ffff"/>
<rect x="300" y="346.8" width="3" height="1.9" fill="#00ffff"/>
<line x1="305.5" y1="338.2" x2="305.5" y2="363.0" stroke="#00ffff"/>
<rect x="304" y="348.8" width="3" height="3.1" fill="#00ffff"/>
<line x1="309.5" y1="322.0" x2="309.5" y2="353.8" stroke="#ff3c3c"/>
<rect x="308.5" y="335.5" width="2" height="15.9" fill="#000" stroke="#ff3c3c"/>
<line x1="313.5" y1="322.0" x2="313.5" y2="338.6" stroke="#ff3c3c"/>
<rect x="312.5" y="327.4" width="2" height="7.8" fill="#000" stroke="#ff3c3c"/>
<line x1="317.5" y1="318.0" x2="317.5" y2="335.7" stroke="#00ffff"/>
<rect x="316" y="326.5" width="3" height="8.5" fill="#00ffff"/>
<line x1="321.5" y1="323.0" x2="321.5" y2="336.6" stroke="#ff3c3c"/>
<rect x="320.5" y="325.8" width="2" height="7.4" fill="#000" stroke="#ff3c3c"/>
<line x1="325.5" y1="324.0" x2="325.5" y2="348.4" stroke="#00ffff"/>
<rect x="324" y="324.0" width="3" height="23.4" fill="#00ffff"/>
<line x1="329.5" y1="310.3" x2="329.5" y2="360.0" stroke="#ff3c3c"/>
<rect x="328.5" y="312.7" width="2" height="33.6" fill="#000" stroke="#ff3c3c"/>
<line x1="333.5" y1="287.0" x2="333.5" y2="326.9" stroke="#ff3c3c"/>
<rect x="332.5" y="297.5" width="2" height="12.3" fill="#000" stroke="#ff3c3c"/>
<line x1="337.5" y1="271.7" x2="337.5" y2="296.7" stroke="#ff3c3c"/>
<rect x="336.5" y="283.5" width="2" height="12.7" fill="#000" stroke="#ff3c3c"/>
<line x1="341.5" y1="271.0" x2="341.5" y2="290.0" stroke="#00ffff"/>
<rect x="340" y="276.8" width="3" height="8.2" fill="#00ffff"/>
<line x1="345.5" y1="282.0" x2="345.5" y2="296.7" stroke="#00ffff"/>
<rect x="344" y="284.0" width="3" height="9.8" fill="#00ffff"/>
<line x1="349.5" y1="275.2" x2="349.5" y2="299.6" stroke="#00ffff"/>
<rect x="348" y="292.8" width="3" height="4.9" fill="#00ffff"/>
<line x1="353.5" y1="284.0" x2="353.5" y2="300.6" stroke="#fff"/>
<line x1="352" y1="297.7" x2="355" y2="297.7" stroke="#fff"/>
<line x1="357.5" y1="286.0" x2="357.5" y2="307.5" stroke="#ff3c3c"/>
<rect x="356.5" y="292.9" width="2" height="5.3" fill="#000" stroke="#ff3c3c"/>
<line x1="361.5" y1="287.0" x2="361.5" y2="296.7" stroke="#ff3c3c"/>
<rect x="360.5" y="291.8" width="2" height="1.0" fill="#000" stroke="#ff3c3c"/>
<line x1="365.5" y1="288.0" x2="365.5" y2="338.6" stroke="#00ffff"/>
<rect x="364" y="290.9" width="3" height="37.9" fill="#00ffff"/>
<line x1="369.5" y1="324.0" x2="369.5" y2="350.3" stroke="#00ffff"/>
<rect x="368" y="328.8" width="3" height="7.8" fill="#00ffff"/>
<line x1="373.5" y1="332.7" x2="373.5" y2="369.8" stroke="#00ffff"/>
<rect x="372" y="335.7" width="3" height="11.1" fill="#00ffff"/>
<line x1="377.5" y1="285.0" x2="377.5" y2="356.2" stroke="#ff3c3c"/>
<rect x="376.5" y="293.3" width="2" height="53.0" fill="#000" stroke="#ff3c3c"/>
<line x1="381.5" y1="278.2" x2="381.5" y2="312.2" stroke="#00ffff"/>
<rect x="380" y="291.8" width="3" height="10.4" fill="#00ffff"/>
<line x1="385.5" y1="290.9" x2="385.5" y2="308.4" stroke="#00ffff"/>
<rect x="384" y="302.2" width="3" height="4.3" fill="#00ffff"/>
<line x1="389.5" y1="274.2" x2="389.5" y2="307.7" stroke="#ff3c3c"/>
<rect x="388.5" y="284.5" width="2" height="22.0" fill="#000" stroke="#ff3c3c"/>
<line x1="393.5" y1="276.2" x2="393.5" y2="288.0" stroke="#ff3c3c"/>
<rect x="392.5" y="282.0" width="2" height="3.5" fill="#000" stroke="#ff3c3c"/>
<line x1="397.5" y1="262.0" x2="397.5" y2="288.0" stroke="#ff3c3c"/>
<rect x="396.5" y="275.7" width="2" height="6.5" fill="#000" stroke="#ff3c3c"/>
<line x1="401.5" y1="256.7" x2="401.5" y2="283.4" stroke="#ff3c3c"/>
<rect x="400.5" y="263.6" width="2" height="12.7" fill="#000" stroke="#ff3c3c"/>
<line x1="405.5" y1="234.6" x2="405.5" y2="275.2" stroke="#ff3c3c"/>
<rect x="404.5" y="257.8" width="2" height="4.2" fill="#000" stroke="#ff3c3c"/>
<line x1="409.5" y1="251.8" x2="409.5" y2="263.5" stroke="#ff3c3c"/>
<rect x="408.5" y="255.2" width="2" height="1.6" fill="#000" stroke="#ff3c3c"/>
<line x1="413.5" y1="237.1" x2="413.5" y2="259.2" stroke="#ff3c3c"/>
<rect x="412.5" y="242.5" width="2" height="12.7" fill="#000" stroke="#ff3c3c"/>
<line x1="417.5" y1="236.2" x2="417.5" y2="247.0" stroke="#ff3c3c"/>
<rect x="416.5" y="240.5" width="2" height="1.0" fill="#000" stroke="#ff3c3c"/>
<line x1="421.5" y1="227.4" x2="421.5" y2="277.6" stroke="#ff3c3c"/>
<rect x="420.5" y="234.7" width="2" height="5.8" fill="#000" stroke="#ff3c3c"/>
<line x1="425.5" y1="224.0" x2="425.5" y2="254.7" stroke="#00ffff"/>
<rect x="424" y="233.8" width="3" height="8.2" fill="#00ffff"/>
<line x1="429.5" y1="218.2" x2="429.5" y2="247.0" stroke="#ff3c3c"/>
<rect x="428.5" y="233.7" width="2" height="7.8" fill="#000" stroke="#ff3c3c"/>
<line x1="433.5" y1="222.5" x2="433.5" y2="236.2" stroke="#ff3c3c"/>
<rect x="432.5" y="228.5" width="2" height="5.2" fill="#000" stroke="#ff3c3c"/>
<line x1="437.5" y1="209.8" x2="437.5" y2="229.3" stroke="#ff3c3c"/>
<rect x="436.5" y="217.5" width="2" height="10.4" fill="#000" stroke="#ff3c3c"/>
<line x1="441.5" y1="207.9" x2="441.5" y2="222.9" stroke="#00ffff"/>
<rect x="440" y="217.6" width="3" height="3.4" fill="#00ffff"/>
<line x1="445.5" y1="209.8" x2="445.5" y2="230.7" stroke="#ff3c3c"/>
<rect x="444.5" y="218.7" width="2" height="1.3" fill="#000" stroke="#ff3c3c"/>
<line x1="449.5" y1="218.6" x2="449.5" y2="255.3" stroke="#00ffff"/>
<rect x="448" y="219.0" width="3" height="35.1" fill="#00ffff"/>
<line x1="453.5" y1="245.0" x2="453.5" y2="266.4" stroke="#ff3c3c"/>
<rect x="452.5" y="249.4" width="2" height="3.8" fill="#000" stroke="#ff3c3c"/>
<line x1="457.5" y1="247.9" x2="457.5" y2="262.0" stroke="#00ffff"/>
<rect x="456" y="248.9" width="3" height="4.5" fill="#00ffff"/>
<line x1="461.5" y1="246.9" x2="461.5" y2="274.8" stroke="#00ffff"/>
<rect x="460" y="248.9" width="3" height="14.2" fill="#00ffff"/>
<line x1="465.5" y1="245.0" x2="465.5" y2="265.9" stroke="#ff3c3c"/>
<rect x="464.5" y="251.3" width="2" height="10.7" fill="#000" stroke="#ff3c3c"/>
<line x1="469.5" y1="211.2" x2="469.5" y2="252.8" stroke="#ff3c3c"/>
<rect x="468.5" y="216.8" width="2" height="30.7" fill="#000" stroke="#ff3c3c"/>
<line x1="473.5" y1="199.0" x2="473.5" y2="220.5" stroke="#ff3c3c"/>
<rect x="472.5" y="200.5" width="2" height="15.6" fill="#000" stroke="#ff3c3c"/>
<line x1="477.5" y1="200.0" x2="477.5" y2="235.2" stroke="#00ffff"/>
<rect x="476" y="202.0" width="3" height="29.9" fill="#00ffff"/>
<line x1="481.5" y1="222.1" x2="481.5" y2="238.5" stroke="#ff3c3c"/>
<rect x="480.5" y="225.9" width="2" height="6.8" fill="#000" stroke="#ff3c3c"/>
<line x1="485.5" y1="211.8" x2="485.5" y2="228.4" stroke="#00ffff"/>
<rect x="484" y="224.5" width="3" height="2.9" fill="#00ffff"/>
<line x1="489.5" y1="217.6" x2="489.5" y2="228.4" stroke="#ff3c3c"/>
<rect x="488.5" y="225.9" width="2" height="1.0" fill="#000" stroke="#ff3c3c"/>
<line x1="493.5" y1="205.3" x2="493.5" y2="235.8" stroke="#ff3c3c"/>
<rect x="492.5" y="210.9" width="2" height="15.0" fill="#000" stroke="#ff3c3c"/>
<line x1="497.5" y1="201.0" x2="497.5" y2="225.4" stroke="#00ffff"/>
<rect x="496" y="211.2" width="3" height="6.4" fill="#00ffff"/>
<line x1="501.5" y1="203.4" x2="501.5" y2="230.0" stroke="#00ffff"/>
<rect x="500" y="217.0" width="3" height="9.4" fill="#00ffff"/>
<line x1="505.5" y1="222.1" x2="505.5" y2="247.9" stroke="#00ffff"/>
<rect x="504" y="225.4" width="3" height="13.7" fill="#00ffff"/>
<line x1="509.5" y1="235.2" x2="509.5" y2="247.9" stroke="#00ffff"/>
<rect x="508" y="239.7" width="3" height="3.3" fill="#00ffff"/>
<line x1="513.5" y1="240.0" x2="513.5" y2="256.7" stroke="#00ffff"/>
<rect x="512" y="242.0" width="3" height="8.8" fill="#00ffff"/>
<line x1="517.5" y1="230.3" x2="517.5" y2="256.7" stroke="#ff3c3c"/>
<rect x="516.5" y="233.7" width="2" height="16.0" fill="#000" stroke="#ff3c3c"/>
<line x1="521.5" y1="195.2" x2="521.5" y2="233.8" stroke="#ff3c3c"/>
<rect x="520.5" y="206.4" width="2" height="25.7" fill="#000" stroke="#ff3c3c"/>
<line x1="525.5" y1="181.3" x2="525.5" y2="208.0" stroke="#ff3c3c"/>
<rect x="524.5" y="191.3" width="2" height="15.2" fill="#000" stroke="#ff3c3c"/>
<line x1="529.5" y1="190.4" x2="529.5" y2="203.0" stroke="#00ffff"/>
<rect x="528" y="191.5" width="3" height="4.1" fill="#00ffff"/>
<line x1="533.5" y1="190.4" x2="533.5" y2="202.0" stroke="#00ffff"/>
<rect x="532" y="192.9" width="3" height="7.1" fill="#00ffff"/>
<line x1="537.5" y1="189.4" x2="537.5" y2="205.0" stroke="#ff3c3c"/>
<rect x="536.5" y="191.8" width="2" height="7.7" fill="#000" stroke="#ff3c3c"/>
<line x1="541.5" y1="189.0" x2="541.5" y2="211.8" stroke="#00ffff"/>
<rect x="540" y="191.0" width="3" height="9.0" fill="#00ffff"/>
<line x1="545.5" y1="140.2" x2="545.5" y2="205.0" stroke="#ff3c3c"/>
<rect x="544.5" y="147.9" width="2" height="51.1" fill="#000" stroke="#ff3c3c"/>
<line x1="549.5" y1="142.9" x2="549.5" y2="163.0" stroke="#00ffff"/>
<rect x="548" y="145.4" width="3" height="16.6" fill="#00ffff"/>
<line x1="553.5" y1="138.6" x2="553.5" y2="161.6" stroke="#ff3c3c"/>
<rect x="552.5" y="141.0" width="2" height="16.6" fill="#000" stroke="#ff3c3c"/>
<line x1="557.5" y1="140.2" x2="557.5" y2="150.3" stroke="#00ffff"/>
<rect x="556" y="140.5" width="3" height="6.9" fill="#00ffff"/>
<line x1="561.5" y1="142.9" x2="561.5" y2="151.9" stroke="#ff3c3c"/>
<rect x="560.5" y="144.0" width="2" height="2.9" fill="#000" stroke="#ff3c3c"/>
<line x1="565.5" y1="141.0" x2="565.5" y2="150.7" stroke="#00ffff"/>
<rect x="564" y="142.1" width="3" height="4.3" fill="#00ffff"/>
<line x1="569.5" y1="124.9" x2="569.5" y2="154.6" stroke="#00ffff"/>
<rect x="568" y="145.4" width="3" height="2.0" fill="#00ffff"/>
<line x1="573.5" y1="121.0" x2="573.5" y2="148.8" stroke="#ff3c3c"/>
<rect x="572.5" y="137.5" width="2" height="10.4" fill="#000" stroke="#ff3c3c"/>
<line x1="577.5" y1="126.9" x2="577.5" y2="137.6" stroke="#ff3c3c"/>
<rect x="576.5" y="131.7" width="2" height="4.4" fill="#000" stroke="#ff3c3c"/>
<line x1="581.5" y1="124.0" x2="581.5" y2="144.8" stroke="#00ffff"/>
<rect x="580" y="126.9" width="3" height="10.1" fill="#00ffff"/>
<line x1="585.5" y1="132.3" x2="585.5" y2="141.0" stroke="#00ffff"/>
<rect x="584" y="135.0" width="3" height="1.6" fill="#00ffff"/>
<line x1="589.5" y1="108.3" x2="589.5" y2="148.0" stroke="#ff3c3c"/>
<rect x="588.5" y="110.2" width="2" height="25.0" fill="#000" stroke="#ff3c3c"/>
<line x1="593.5" y1="105.0" x2="593.5" y2="124.0" stroke="#00ffff"/>
<rect x="592" y="109.7" width="3" height="14.3" fill="#00ffff"/>
<line x1="597.5" y1="117.1" x2="597.5" y2="143.5" stroke="#00ffff"/>
<rect x="596" y="121.4" width="3" height="22.1" fill="#00ffff"/>
<line x1="601.5" y1="139.6" x2="601.5" y2="148.0" stroke="#ff3c3c"/>
<rect x="600.5" y="141.5" width="2" height="1.5" fill="#000" stroke="#ff3c3c"/>
<line x1="605.5" y1="136.2" x2="605.5" y2="147.4" stroke="#00ffff"/>
<rect x="604" y="141.0" width="3" height="2.5" fill="#00ffff"/>
<line x1="609.5" y1="129.2" x2="609.5" y2="147.4" stroke="#ff3c3c"/>
<rect x="608.5" y="135.2" width="2" height="7.8" fill="#000" stroke="#ff3c3c"/>
<line x1="613.5" y1="132.7" x2="613.5" y2="165.9" stroke="#00ffff"/>
<rect x="612" y="133.7" width="3" height="29.3" fill="#00ffff"/>
<line x1="617.5" y1="155.2" x2="617.5" y2="181.6" stroke="#00ffff"/>
<rect x="616" y="160.5" width="3" height="17.2" fill="#00ffff"/>
<line x1="621.5" y1="168.3" x2="621.5" y2="195.6" stroke="#ff3c3c"/>
<rect x="620.5" y="171.9" width="2" height="1.7" fill="#000" stroke="#ff3c3c"/>
<line x1="625.5" y1="163.0" x2="625.5" y2="178.6" stroke="#00ffff"/>
<rect x="624" y="171.4" width="3" height="3.3" fill="#00ffff"/>
<line x1="629.5" y1="170.2" x2="629.5" y2="186.4" stroke="#00ffff"/>
<rect x="628" y="173.4" width="3" height="6.2" fill="#00ffff"/>
<line x1="633.5" y1="176.7" x2="633.5" y2="191.3" stroke="#00ffff"/>
<rect x="632" y="179.2" width="3" height="7.2" fill="#00ffff"/>
<line x1="637.5" y1="170.8" x2="637.5" y2="199.5" stroke="#00ffff"/>
<rect x="636" y="186.4" width="3" height="2.0" fill="#00ffff"/>
<line x1="641.5" y1="153.8" x2="641.5" y2="192.9" stroke="#ff3c3c"/>
<rect x="640.5" y="177.8" width="2" height="9.1" fill="#000" stroke="#ff3c3c"/>
<line x1="645.5" y1="158.1" x2="645.5" y2="184.5" stroke="#ff3c3c"/>
<rect x="644.5" y="176.6" width="2" height="1.5" fill="#000" stroke="#ff3c3c"/>
<line x1="649.5" y1="168.3" x2="649.5" y2="178.6" stroke="#ff3c3c"/>
<rect x="648.5" y="172.7" width="2" height="3.5" fill="#000" stroke="#ff3c3c"/>
<line x1="653.5" y1="163.0" x2="653.5" y2="176.1" stroke="#ff3c3c"/>
<rect x="652.5" y="168.8" width="2" height="2.5" fill="#000" stroke="#ff3c3c"/>
<line x1="657.5" y1="164.4" x2="657.5" y2="195.6" stroke="#00ffff"/>
<rect x="656" y="168.3" width="3" height="22.1" fill="#00ffff"/>
<line x1="661.5" y1="189.4" x2="661.5" y2="224.6" stroke="#00ffff"/>
<rect x="660" y="190.4" width="3" height="19.1" fill="#00ffff"/>
<line x1="665.5" y1="202.0" x2="665.5" y2="231.0" stroke="#00ffff"/>
<rect x="664" y="209.0" width="3" height="10.7" fill="#00ffff"/>
<line x1="669.5" y1="209.0" x2="669.5" y2="232.5" stroke="#ff3c3c"/>
<rect x="668.5" y="218.5" width="2" height="1.5" fill="#000" stroke="#ff3c3c"/>
<line x1="673.5" y1="216.0" x2="673.5" y2="241.9" stroke="#00ffff"/>
<rect x="672" y="218.0" width="3" height="13.5" fill="#00ffff"/>
<line x1="677.5" y1="218.3" x2="677.5" y2="233.5" stroke="#ff3c3c"/>
<rect x="676.5" y="220.5" width="2" height="8.6" fill="#000" stroke="#ff3c3c"/>
<line x1="681.5" y1="212.0" x2="681.5" y2="224.6" stroke="#ff3c3c"/>
<rect x="680.5" y="216.5" width="2" height="4.7" fill="#000" stroke="#ff3c3c"/>
<line x1="685.5" y1="207.0" x2="685.5" y2="233.5" stroke="#00ffff"/>
<rect x="684" y="216.0" width="3" height="11.6" fill="#00ffff"/>
<line x1="689.5" y1="225.7" x2="689.5" y2="253.0" stroke="#00ffff"/>
<rect x="688" y="226.6" width="3" height="8.8" fill="#00ffff"/>
<line x1="693.5" y1="184.2" x2="693.5" y2="238.8" stroke="#ff3c3c"/>
<rect x="692.5" y="188.5" width="2" height="45.5" fill="#000" stroke="#ff3c3c"/>
<line x1="697.5" y1="168.9" x2="697.5" y2="193.0" stroke="#ff3c3c"/>
<rect x="696.5" y="175.9" width="2" height="11.3" fill="#000" stroke="#ff3c3c"/>
<line x1="701.5" y1="139.0" x2="701.5" y2="167.9" stroke="#00ffff"/>
<rect x="700" y="142.9" width="3" height="19.1" fill="#00ffff"/>
<line x1="705.5" y1="151.3" x2="705.5" y2="167.9" stroke="#00ffff"/>
<rect x="704" y="161.6" width="3" height="2.8" fill="#00ffff"/>
<line x1="709.5" y1="150.3" x2="709.5" y2="174.7" stroke="#ff3c3c"/>
<rect x="708.5" y="161.0" width="2" height="2.1" fill="#000" stroke="#ff3c3c"/>
<line x1="713.5" y1="134.3" x2="713.5" y2="163.0" stroke="#ff3c3c"/>
<rect x="712.5" y="145.0" width="2" height="15.0" fill="#000" stroke="#ff3c3c"/>
<line x1="717.5" y1="130.4" x2="717.5" y2="154.2" stroke="#ff3c3c"/>
<rect x="716.5" y="137.1" width="2" height="8.4" fill="#000" stroke="#ff3c3c"/>
<line x1="721.5" y1="121.6" x2="721.5" y2="134.5" stroke="#ff3c3c"/>
<rect x="720.5" y="126.8" width="2" height="4.4" fill="#000" stroke="#ff3c3c"/>
<line x1="725.5" y1="124.0" x2="725.5" y2="135.0" stroke="#00ffff"/>
<rect x="724" y="128.7" width="3" height="4.7" fill="#00ffff"/>
<line x1="729.5" y1="130.3" x2="729.5" y2="177.9" stroke="#00ffff"/>
<rect x="728" y="132.2" width="3" height="32.3" fill="#00ffff"/>
<line x1="733.5" y1="150.9" x2="733.5" y2="179.5" stroke="#ff3c3c"/>
<rect x="732.5" y="159.6" width="2" height="5.4" fill="#000" stroke="#ff3c3c"/>
</g>
<polyline points="64.9,183.6 68.8,184.8 77.6,176.4 83.4,173.0 91.3,165.2 97.1,162.3 102.0,167.6 110.8,184.2 118.6,202.7 126.4,221.3 133.2,251.6 141.1,289.6 149.8,294.5 157.7,292.2 161.6,289.6 166.4,278.9 172.3,264.3 179.1,258.4 188.9,258.4 196.7,265.2 200.6,264.8 214.3,253.9 218.2,253.5 222.1,255.5 226.0,255.5 233.8,250.2 239.7,253.5 245.5,265.2 250.4,284.8 253.9,301.5 259.8,317.1 265.6,327.9 271.5,340.5 277.3,346.4 282.2,348.8 286.1,347.4 291.0,340.5 296.9,334.7 301.8,332.3 305.7,331.2 312.5,324.0 317.4,319.0 322.3,316.1 325.2,315.2 330.0,308.3 334.0,297.6 337.8,285.0 341.7,277.2 349.5,271.3 357.3,264.5 361.2,268.4 369.0,270.4 373.9,270.4 380.8,267.4 385.7,269.0 394.5,263.5 402.3,255.7 408.1,248.9 414.0,237.1 421.8,225.4 427.7,215.7 435.5,202.0 442.3,191.2 445.6,187.3 449.1,191.2 453.4,200.0 457.9,202.0 465.7,208.4 469.6,206.9 473.5,203.4 486.2,203.4 490.2,202.0 496.0,199.0 501.9,197.1 509.7,198.7 517.5,199.5 520.0,198.2 525.9,191.3 531.7,184.5 537.6,181.6 541.1,181.2 545.4,167.9 551.2,150.3 557.1,137.6 564.9,123.0 572.7,109.3 580.5,99.5 586.4,94.6 589.9,92.1 594.2,95.2 598.1,98.0 607.9,100.5 615.7,107.0 621.2,113.6 629.4,110.3 637.2,106.4 645.0,107.0 652.8,109.3 656.7,112.2 665.5,112.8 670.4,120.0 678.2,128.8 684.1,137.6 689.9,147.4 694.7,150.5 699.4,149.8 706.4,146.2 712.3,138.0 717.0,127.5 721.6,118.1 725.6,113.0 729.8,112.3 733.8,111.3" fill="none" stroke="#e8e800" stroke-width="1.2"/>
<polyline points="65.5,246.0 69.8,246.4 77.6,250.3 81.5,251.2 89.3,259.0 99.0,269.8 106.9,280.5 114.7,295.2 122.5,305.9 130.3,315.7 138.1,325.5 144.0,329.0 157.7,329.4 165.5,326.4 173.3,318.6 181.1,315.7 188.9,313.4 197.7,311.2 204.5,313.4 216.2,320.0 226.0,326.4 235.8,337.2 245.5,350.9 250.0,355.2 255.9,361.0 261.7,366.9 268.5,371.8 273.4,374.7 277.3,374.7 281.2,377.3 286.1,376.1 293.9,373.4 304.7,371.8 312.5,365.9 320.3,359.1 326.2,357.1 334.0,350.3 341.8,340.5 351.6,330.4 359.4,322.0 364.2,318.7 374.0,318.1 382.8,313.2 390.6,308.3 394.5,302.6 404.2,294.8 414.0,288.9 421.8,285.0 429.6,279.1 437.4,272.3 445.2,263.5 451.1,257.7 457.0,253.8 464.8,248.9 469.6,244.0 474.5,239.7 482.3,236.2 490.2,232.7 496.0,230.3 505.8,230.3 513.6,232.3 519.5,232.0 525.3,227.8 527.8,225.5 539.5,215.7 549.3,207.9 559.0,199.1 570.8,188.4 580.5,177.7 587.4,166.9 594.2,158.1 602.0,151.3 609.8,147.0 615.7,145.4 621.6,144.1 627.4,145.8 637.2,151.3 647.0,155.2 654.8,157.5 660.6,162.0 666.5,168.9 674.3,178.6 682.1,186.4 688.0,193.3 691.9,196.2 697.7,196.6 705.5,195.2 712.4,192.3 720.5,186.1 725.2,184.4 733.8,183.5" fill="none" stroke="#e8e8e8" stroke-width="1.2"/>
<polyline points="65.5,308.8 69.4,307.8 73.7,315.6 79.5,324.4 85.4,336.0 89.7,346.9 94.2,361.5 102.0,378.0 108.8,387.9 117.6,400.0 124.5,401.6 130.3,395.7 136.2,382.0 141.0,367.4 146.0,365.4 157.7,365.4 161.6,367.4 168.4,373.2 173.3,375.2 182.0,371.3 188.9,371.9 194.8,360.5 197.7,358.2 201.6,360.5 205.5,369.3 213.3,383.6 222.1,393.8 228.0,402.5 232.9,417.2 241.6,430.5 245.2,430.5 250.0,425.5 256.8,415.7 261.7,411.2 265.2,413.2 273.4,404.0 277.3,403.0 284.2,406.6 289.0,407.0 294.9,410.9 300.8,411.2 305.7,412.4 314.5,405.0 325.2,399.1 330.0,400.1 336.9,403.4 341.4,403.4 345.7,397.2 356.4,386.4 362.3,371.8 367.2,365.9 370.1,365.0 374.0,366.9 378.9,362.0 385.7,353.2 396.5,346.4 401.4,346.0 406.2,340.5 410.2,340.2 416.0,343.5 421.9,347.0 428.7,348.4 433.6,347.4 438.5,348.4 442.4,346.4 446.3,336.6 450.0,324.9 454.0,310.0 458.9,300.6 464.8,288.9 470.6,281.1 476.5,273.3 482.3,267.4 488.2,263.9 496.0,262.5 505.8,262.1 512.6,265.1 518.5,265.5 520.0,266.1 525.5,269.6 531.7,266.1 537.6,263.4 541.5,256.3 547.3,262.8 553.2,269.2 558.1,269.6 561.4,270.6 568.8,266.3 576.6,264.5 581.5,259.8 587.4,248.1 592.3,232.5 595.2,220.8 599.1,211.0 605.9,199.3 613.8,185.6 621.6,174.9 629.4,184.6 637.2,194.4 647.0,201.2 653.8,203.6 658.7,209.0 664.5,220.4 672.3,229.6 680.2,237.4 688.9,243.2 693.8,241.3 701.6,242.3 710.0,244.7 715.8,249.4 721.6,253.6 726.3,255.5 733.8,255.5" fill="none" stroke="#e800e8" stroke-width="1.2"/>
<text x="538.5" y="109.5" fill="#e0e0e0" font-size="13" font-family='"Liberation Mono","Noto Sans CJK SC",monospace' textLength="40" lengthAdjust="spacingAndGlyphs">1.4036</text>
<path d="M582 105.5h10M589 103l3.5 2.5-3.5 2.5" fill="none" stroke="#b0b0b0" stroke-width="1"/>
<text x="178.5" y="425" fill="#e0e0e0" font-size="13" font-family='"Liberation Mono","Noto Sans CJK SC",monospace' textLength="40.5" lengthAdjust="spacingAndGlyphs">1.3429</text>
<path d="M222 420.5h10M229 418l3.5 2.5-3.5 2.5" fill="none" stroke="#b0b0b0" stroke-width="1"/>
<polyline points="65.4,529.5 68.4,530.8 74.2,535.7 78.1,536.1 82.0,533.4 85.9,534.7 89.8,543.9 93.8,543.5 97.7,542.0 102.5,535.7 106.4,531.4 109.8,534.7 113.7,549.8 117.2,539.6 121.5,525.0 126.0,524.4 129.3,511.9 133.8,515.8 137.7,509.3 141.0,499.6 145.5,510.3 149.4,507.4 153.3,505.4 157.8,505.0 161.1,497.6 165.0,486.9 169.5,481.4 173.8,487.9 177.7,498.6 181.6,514.2 185.5,521.0 189.8,513.8 193.9,520.0 200.7,527.9 205.6,535.3 213.4,534.7 217.3,525.5 221.2,528.9 225.2,524.0 230.0,541.6 233.4,542.0 236.9,528.9 240.8,529.8 244.7,522.0 249.0,518.1 253.5,522.0 257.4,515.8 261.3,519.1 265.6,525.9 269.1,513.8 273.6,513.8 276.9,504.8 278.9,507.4 281.4,525.5 284.7,506.4 288.6,500.9 293.1,494.7 297.4,500.2 305.2,502.9 309.1,496.6 313.0,492.3 317.9,496.6 321.8,491.8 325.2,503.5 329.1,487.9 333.6,482.6 337.5,478.5 341.4,480.0 346.2,485.9 352.1,488.2 357.0,485.3 361.9,485.9 365.4,508.4 373.2,519.1 377.1,492.3 381.4,496.6 384.9,498.2 389.4,488.8 394.6,486.9 402.5,480.0 409.3,477.1 414.2,472.2 418.1,472.2 421.0,469.7 425.3,476.1 432.7,470.3 437.6,465.4 441.5,468.9 445.4,467.3 449.3,497.6 453.2,496.6 457.1,499.6 461.6,506.4 465.9,492.7 469.5,481.0 473.8,474.2 477.7,493.7 481.6,492.3 487.4,493.1 493.3,485.9 499.1,492.7 505.0,502.5 508.9,506.4 513.8,512.3 517.7,500.5 521.6,487.9 526.1,480.6 529.4,482.0 533.9,486.5 537.2,482.6 541.7,488.4 545.0,467.7 549.5,475.2 553.4,469.7 557.7,474.2 561.6,473.6 569.1,476.7 577.4,469.3 581.7,474.8 585.6,474.8 589.5,463.8 593.0,472.2 597.3,489.8 601.2,489.2 605.2,491.2 609.6,486.9 613.9,506.4 617.5,515.2 621.8,511.3 625.7,513.2 635.4,521.0 637.4,521.0 641.3,513.8 645.2,512.3 653.6,505.4 657.5,522.0 661.4,532.8 665.7,537.1 668.6,536.1 673.5,542.0 677.4,533.8 681.3,529.5 689.5,539.2 693.4,502.5 697.9,494.7 701.8,489.2 705.7,491.2 709.6,488.8 714.5,480.0 718.8,475.2 722.3,474.6 725.9,478.1 729.8,502.5 733.7,499.0" fill="none" stroke="#ff38f0" stroke-width="1.3"/>
<polyline points="65.4,529.5 68.4,530.8 74.2,535.7 78.1,536.1 82.0,533.4 85.9,534.7 89.8,543.9 93.8,543.5 97.7,542.0 102.5,535.7 106.4,531.4 109.8,534.7 113.7,549.8 117.2,539.6 121.5,525.0 126.0,524.4 129.3,511.9 133.8,515.8 137.7,509.3 141.0,499.6 145.5,510.3 149.4,507.4 153.3,505.4 157.8,505.0 161.1,497.6 165.0,486.9 169.5,481.4 173.8,487.9 177.7,498.6 181.6,514.2 185.5,521.0 189.8,513.8 193.9,520.0 200.7,527.9 205.6,535.3 213.4,534.7 217.3,525.5 221.2,528.9 225.2,524.0 230.0,541.6 233.4,542.0 236.9,528.9 240.8,529.8 244.7,522.0 249.0,518.1 253.5,522.0 257.4,515.8 261.3,519.1 265.6,525.9 269.1,513.8 273.6,513.8 276.9,504.8 278.9,507.4 281.4,525.5 284.7,506.4 288.6,500.9 293.1,494.7 297.4,500.2 305.2,502.9 309.1,496.6 313.0,492.3 317.9,496.6 321.8,491.8 325.2,503.5 329.1,487.9 333.6,482.6 337.5,478.5 341.4,480.0 346.2,485.9 352.1,488.2 357.0,485.3 361.9,485.9 365.4,508.4 373.2,519.1 377.1,492.3 381.4,496.6 384.9,498.2 389.4,488.8 394.6,486.9 402.5,480.0 409.3,477.1 414.2,472.2 418.1,472.2 421.0,469.7 425.3,476.1 432.7,470.3 437.6,465.4 441.5,468.9 445.4,467.3 449.3,497.6 453.2,496.6 457.1,499.6 461.6,506.4 465.9,492.7 469.5,481.0 473.8,474.2 477.7,493.7 481.6,492.3 487.4,493.1 493.3,485.9 499.1,492.7 505.0,502.5 508.9,506.4 513.8,512.3 517.7,500.5 521.6,487.9 526.1,480.6 529.4,482.0 533.9,486.5 537.2,482.6 541.7,488.4 545.0,467.7 549.5,475.2 553.4,469.7 557.7,474.2 561.6,473.6 569.1,476.7 577.4,469.3 581.7,474.8 585.6,474.8 589.5,463.8 593.0,472.2 597.3,489.8 601.2,489.2 605.2,491.2 609.6,486.9 613.9,506.4 617.5,515.2 621.8,511.3 625.7,513.2 635.4,521.0 637.4,521.0 641.3,513.8 645.2,512.3 653.6,505.4 657.5,522.0 661.4,532.8 665.7,537.1 668.6,536.1 673.5,542.0 677.4,533.8 681.3,529.5 689.5,539.2 693.4,502.5 697.9,494.7 701.8,489.2 705.7,491.2 709.6,488.8 714.5,480.0 718.8,475.2 722.3,474.6 725.9,478.1 729.8,502.5 733.7,499.0" fill="none" stroke="#ff3030" stroke-width="1.3" stroke-dasharray="1 2.4"/>
<g shape-rendering="crispEdges">
<line x1="65.5" y1="619.5" x2="65.5" y2="643.8" stroke="#00ffff"/>
<line x1="69.5" y1="619.5" x2="69.5" y2="655.0" stroke="#00ffff"/>
<line x1="73.5" y1="619.5" x2="73.5" y2="663.7" stroke="#00ffff"/>
<line x1="77.5" y1="619.5" x2="77.5" y2="666.6" stroke="#00ffff"/>
<line x1="81.5" y1="619.5" x2="81.5" y2="666.2" stroke="#00ffff"/>
<line x1="85.5" y1="619.5" x2="85.5" y2="666.6" stroke="#00ffff"/>
<line x1="89.5" y1="619.5" x2="89.5" y2="666.6" stroke="#00ffff"/>
<line x1="93.5" y1="619.5" x2="93.5" y2="665.6" stroke="#00ffff"/>
<line x1="97.5" y1="619.5" x2="97.5" y2="661.7" stroke="#00ffff"/>
<line x1="101.5" y1="619.5" x2="101.5" y2="655.5" stroke="#00ffff"/>
<line x1="105.5" y1="619.5" x2="105.5" y2="648.6" stroke="#00ffff"/>
<line x1="109.5" y1="619.5" x2="109.5" y2="645.7" stroke="#00ffff"/>
<line x1="113.5" y1="619.5" x2="113.5" y2="646.7" stroke="#00ffff"/>
<line x1="117.5" y1="619.5" x2="117.5" y2="645.3" stroke="#00ffff"/>
<line x1="121.5" y1="619.5" x2="121.5" y2="636.9" stroke="#00ffff"/>
<line x1="125.5" y1="619.5" x2="125.5" y2="630.7" stroke="#00ffff"/>
<line x1="133.5" y1="619.5" x2="133.5" y2="617.4" stroke="#ff3c3c"/>
<line x1="137.5" y1="619.5" x2="137.5" y2="610.9" stroke="#ff3c3c"/>
<line x1="141.5" y1="619.5" x2="141.5" y2="603.1" stroke="#ff3c3c"/>
<line x1="145.5" y1="619.5" x2="145.5" y2="603.1" stroke="#ff3c3c"/>
<line x1="149.5" y1="619.5" x2="149.5" y2="601.8" stroke="#ff3c3c"/>
<line x1="153.5" y1="619.5" x2="153.5" y2="601.2" stroke="#ff3c3c"/>
<line x1="157.5" y1="619.5" x2="157.5" y2="601.2" stroke="#ff3c3c"/>
<line x1="161.5" y1="619.5" x2="161.5" y2="597.9" stroke="#ff3c3c"/>
<line x1="165.5" y1="619.5" x2="165.5" y2="593.0" stroke="#ff3c3c"/>
<line x1="169.5" y1="619.5" x2="169.5" y2="588.1" stroke="#ff3c3c"/>
<line x1="173.5" y1="619.5" x2="173.5" y2="588.1" stroke="#ff3c3c"/>
<line x1="177.5" y1="619.5" x2="177.5" y2="593.9" stroke="#ff3c3c"/>
<line x1="181.5" y1="619.5" x2="181.5" y2="605.1" stroke="#ff3c3c"/>
<line x1="185.5" y1="619.5" x2="185.5" y2="617.4" stroke="#ff3c3c"/>
<line x1="193.5" y1="619.5" x2="193.5" y2="625.2" stroke="#00ffff"/>
<line x1="197.5" y1="619.5" x2="197.5" y2="631.6" stroke="#00ffff"/>
<line x1="201.5" y1="619.5" x2="201.5" y2="635.9" stroke="#00ffff"/>
<line x1="205.5" y1="619.5" x2="205.5" y2="642.8" stroke="#00ffff"/>
<line x1="209.5" y1="619.5" x2="209.5" y2="645.7" stroke="#00ffff"/>
<line x1="213.5" y1="619.5" x2="213.5" y2="646.1" stroke="#00ffff"/>
<line x1="217.5" y1="619.5" x2="217.5" y2="640.8" stroke="#00ffff"/>
<line x1="221.5" y1="619.5" x2="221.5" y2="637.9" stroke="#00ffff"/>
<line x1="225.5" y1="619.5" x2="225.5" y2="635.0" stroke="#00ffff"/>
<line x1="229.5" y1="619.5" x2="229.5" y2="639.8" stroke="#00ffff"/>
<line x1="233.5" y1="619.5" x2="233.5" y2="642.8" stroke="#00ffff"/>
<line x1="237.5" y1="619.5" x2="237.5" y2="638.9" stroke="#00ffff"/>
<line x1="241.5" y1="619.5" x2="241.5" y2="635.0" stroke="#00ffff"/>
<line x1="245.5" y1="619.5" x2="245.5" y2="629.1" stroke="#00ffff"/>
<line x1="249.5" y1="619.5" x2="249.5" y2="621.9" stroke="#00ffff"/>
<line x1="257.5" y1="619.5" x2="257.5" y2="616.4" stroke="#ff3c3c"/>
<line x1="261.5" y1="619.5" x2="261.5" y2="612.9" stroke="#ff3c3c"/>
<line x1="265.5" y1="619.5" x2="265.5" y2="616.0" stroke="#ff3c3c"/>
<line x1="269.5" y1="619.5" x2="269.5" y2="612.1" stroke="#ff3c3c"/>
<line x1="273.5" y1="619.5" x2="273.5" y2="610.2" stroke="#ff3c3c"/>
<line x1="277.5" y1="619.5" x2="277.5" y2="605.1" stroke="#ff3c3c"/>
<line x1="281.5" y1="619.5" x2="281.5" y2="612.9" stroke="#ff3c3c"/>
<line x1="285.5" y1="619.5" x2="285.5" y2="608.2" stroke="#ff3c3c"/>
<line x1="289.5" y1="619.5" x2="289.5" y2="603.1" stroke="#ff3c3c"/>
<line x1="293.5" y1="619.5" x2="293.5" y2="596.9" stroke="#ff3c3c"/>
<line x1="297.5" y1="619.5" x2="297.5" y2="595.9" stroke="#ff3c3c"/>
<line x1="301.5" y1="619.5" x2="301.5" y2="597.9" stroke="#ff3c3c"/>
<line x1="305.5" y1="619.5" x2="305.5" y2="599.8" stroke="#ff3c3c"/>
<line x1="309.5" y1="619.5" x2="309.5" y2="598.8" stroke="#ff3c3c"/>
<line x1="313.5" y1="619.5" x2="313.5" y2="596.9" stroke="#ff3c3c"/>
<line x1="317.5" y1="619.5" x2="317.5" y2="598.8" stroke="#ff3c3c"/>
<line x1="321.5" y1="619.5" x2="321.5" y2="598.8" stroke="#ff3c3c"/>
<line x1="325.5" y1="619.5" x2="325.5" y2="605.1" stroke="#ff3c3c"/>
<line x1="329.5" y1="619.5" x2="329.5" y2="601.8" stroke="#ff3c3c"/>
<line x1="333.5" y1="619.5" x2="333.5" y2="596.9" stroke="#ff3c3c"/>
<line x1="337.5" y1="619.5" x2="337.5" y2="593.0" stroke="#ff3c3c"/>
<line x1="341.5" y1="619.5" x2="341.5" y2="592.0" stroke="#ff3c3c"/>
<line x1="345.5" y1="619.5" x2="345.5" y2="594.9" stroke="#ff3c3c"/>
<line x1="349.5" y1="619.5" x2="349.5" y2="598.8" stroke="#ff3c3c"/>
<line x1="353.5" y1="619.5" x2="353.5" y2="603.7" stroke="#ff3c3c"/>
<line x1="357.5" y1="619.5" x2="357.5" y2="607.0" stroke="#ff3c3c"/>
<line x1="361.5" y1="619.5" x2="361.5" y2="610.2" stroke="#ff3c3c"/>
<line x1="369.5" y1="619.5" x2="369.5" y2="629.1" stroke="#00ffff"/>
<line x1="373.5" y1="619.5" x2="373.5" y2="636.9" stroke="#00ffff"/>
<line x1="377.5" y1="619.5" x2="377.5" y2="630.1" stroke="#00ffff"/>
<line x1="381.5" y1="619.5" x2="381.5" y2="625.8" stroke="#00ffff"/>
<line x1="385.5" y1="619.5" x2="385.5" y2="624.6" stroke="#00ffff"/>
<line x1="393.5" y1="619.5" x2="393.5" y2="617.4" stroke="#ff3c3c"/>
<line x1="397.5" y1="619.5" x2="397.5" y2="614.0" stroke="#ff3c3c"/>
<line x1="401.5" y1="619.5" x2="401.5" y2="610.2" stroke="#ff3c3c"/>
<line x1="405.5" y1="619.5" x2="405.5" y2="607.0" stroke="#ff3c3c"/>
<line x1="409.5" y1="619.5" x2="409.5" y2="606.2" stroke="#ff3c3c"/>
<line x1="413.5" y1="619.5" x2="413.5" y2="603.1" stroke="#ff3c3c"/>
<line x1="417.5" y1="619.5" x2="417.5" y2="603.1" stroke="#ff3c3c"/>
<line x1="421.5" y1="619.5" x2="421.5" y2="601.8" stroke="#ff3c3c"/>
<line x1="425.5" y1="619.5" x2="425.5" y2="605.1" stroke="#ff3c3c"/>
<line x1="429.5" y1="619.5" x2="429.5" y2="607.0" stroke="#ff3c3c"/>
<line x1="433.5" y1="619.5" x2="433.5" y2="608.2" stroke="#ff3c3c"/>
<line x1="437.5" y1="619.5" x2="437.5" y2="607.0" stroke="#ff3c3c"/>
<line x1="441.5" y1="619.5" x2="441.5" y2="609.0" stroke="#ff3c3c"/>
<line x1="445.5" y1="619.5" x2="445.5" y2="610.9" stroke="#ff3c3c"/>
<line x1="453.5" y1="619.5" x2="453.5" y2="626.6" stroke="#00ffff"/>
<line x1="457.5" y1="619.5" x2="457.5" y2="631.6" stroke="#00ffff"/>
<line x1="461.5" y1="619.5" x2="461.5" y2="636.9" stroke="#00ffff"/>
<line x1="465.5" y1="619.5" x2="465.5" y2="636.9" stroke="#00ffff"/>
<line x1="469.5" y1="619.5" x2="469.5" y2="629.1" stroke="#00ffff"/>
<line x1="473.5" y1="619.5" x2="473.5" y2="620.7" stroke="#00ffff"/>
<line x1="477.5" y1="619.5" x2="477.5" y2="623.8" stroke="#00ffff"/>
<line x1="481.5" y1="619.5" x2="481.5" y2="623.8" stroke="#00ffff"/>
<line x1="485.5" y1="619.5" x2="485.5" y2="625.2" stroke="#00ffff"/>
<line x1="489.5" y1="619.5" x2="489.5" y2="625.8" stroke="#00ffff"/>
<line x1="493.5" y1="619.5" x2="493.5" y2="622.7" stroke="#00ffff"/>
<line x1="497.5" y1="619.5" x2="497.5" y2="622.7" stroke="#00ffff"/>
<line x1="501.5" y1="619.5" x2="501.5" y2="624.6" stroke="#00ffff"/>
<line x1="505.5" y1="619.5" x2="505.5" y2="630.1" stroke="#00ffff"/>
<line x1="509.5" y1="619.5" x2="509.5" y2="634.0" stroke="#00ffff"/>
<line x1="513.5" y1="619.5" x2="513.5" y2="637.9" stroke="#00ffff"/>
<line x1="517.5" y1="619.5" x2="517.5" y2="635.0" stroke="#00ffff"/>
<line x1="521.5" y1="619.5" x2="521.5" y2="626.6" stroke="#00ffff"/>
<line x1="529.5" y1="619.5" x2="529.5" y2="616.0" stroke="#ff3c3c"/>
<line x1="533.5" y1="619.5" x2="533.5" y2="614.8" stroke="#ff3c3c"/>
<line x1="537.5" y1="619.5" x2="537.5" y2="612.9" stroke="#ff3c3c"/>
<line x1="541.5" y1="619.5" x2="541.5" y2="614.8" stroke="#ff3c3c"/>
<line x1="545.5" y1="619.5" x2="545.5" y2="605.1" stroke="#ff3c3c"/>
<line x1="549.5" y1="619.5" x2="549.5" y2="601.8" stroke="#ff3c3c"/>
<line x1="553.5" y1="619.5" x2="553.5" y2="597.9" stroke="#ff3c3c"/>
<line x1="557.5" y1="619.5" x2="557.5" y2="597.9" stroke="#ff3c3c"/>
<line x1="561.5" y1="619.5" x2="561.5" y2="599.8" stroke="#ff3c3c"/>
<line x1="565.5" y1="619.5" x2="565.5" y2="602.7" stroke="#ff3c3c"/>
<line x1="569.5" y1="619.5" x2="569.5" y2="607.0" stroke="#ff3c3c"/>
<line x1="573.5" y1="619.5" x2="573.5" y2="608.2" stroke="#ff3c3c"/>
<line x1="577.5" y1="619.5" x2="577.5" y2="609.0" stroke="#ff3c3c"/>
<line x1="581.5" y1="619.5" x2="581.5" y2="612.1" stroke="#ff3c3c"/>
<line x1="585.5" y1="619.5" x2="585.5" y2="615.4" stroke="#ff3c3c"/>
<line x1="589.5" y1="619.5" x2="589.5" y2="612.9" stroke="#ff3c3c"/>
<line x1="593.5" y1="619.5" x2="593.5" y2="615.4" stroke="#ff3c3c"/>
<line x1="597.5" y1="619.5" x2="597.5" y2="620.7" stroke="#00ffff"/>
<line x1="601.5" y1="619.5" x2="601.5" y2="625.8" stroke="#00ffff"/>
<line x1="605.5" y1="619.5" x2="605.5" y2="630.1" stroke="#00ffff"/>
<line x1="609.5" y1="619.5" x2="609.5" y2="630.5" stroke="#00ffff"/>
<line x1="613.5" y1="619.5" x2="613.5" y2="637.5" stroke="#00ffff"/>
<line x1="617.5" y1="619.5" x2="617.5" y2="644.7" stroke="#00ffff"/>
<line x1="621.5" y1="619.5" x2="621.5" y2="647.7" stroke="#00ffff"/>
<line x1="625.5" y1="619.5" x2="625.5" y2="648.6" stroke="#00ffff"/>
<line x1="629.5" y1="619.5" x2="629.5" y2="649.6" stroke="#00ffff"/>
<line x1="633.5" y1="619.5" x2="633.5" y2="650.6" stroke="#00ffff"/>
<line x1="637.5" y1="619.5" x2="637.5" y2="650.6" stroke="#00ffff"/>
<line x1="641.5" y1="619.5" x2="641.5" y2="646.7" stroke="#00ffff"/>
<line x1="645.5" y1="619.5" x2="645.5" y2="643.8" stroke="#00ffff"/>
<line x1="649.5" y1="619.5" x2="649.5" y2="638.9" stroke="#00ffff"/>
<line x1="653.5" y1="619.5" x2="653.5" y2="634.0" stroke="#00ffff"/>
<line x1="657.5" y1="619.5" x2="657.5" y2="635.5" stroke="#00ffff"/>
<line x1="661.5" y1="619.5" x2="661.5" y2="640.8" stroke="#00ffff"/>
<line x1="665.5" y1="619.5" x2="665.5" y2="644.7" stroke="#00ffff"/>
<line x1="669.5" y1="619.5" x2="669.5" y2="645.7" stroke="#00ffff"/>
<line x1="673.5" y1="619.5" x2="673.5" y2="646.7" stroke="#00ffff"/>
<line x1="677.5" y1="619.5" x2="677.5" y2="644.7" stroke="#00ffff"/>
<line x1="681.5" y1="619.5" x2="681.5" y2="640.8" stroke="#00ffff"/>
<line x1="685.5" y1="619.5" x2="685.5" y2="638.9" stroke="#00ffff"/>
<line x1="689.5" y1="619.5" x2="689.5" y2="633.0" stroke="#00ffff"/>
<line x1="693.5" y1="619.5" x2="693.5" y2="625.8" stroke="#00ffff"/>
<line x1="697.5" y1="619.5" x2="697.5" y2="616.4" stroke="#ff3c3c"/>
<line x1="701.5" y1="619.5" x2="701.5" y2="605.1" stroke="#ff3c3c"/>
<line x1="705.5" y1="619.5" x2="705.5" y2="600.4" stroke="#ff3c3c"/>
<line x1="709.5" y1="619.5" x2="709.5" y2="596.5" stroke="#ff3c3c"/>
<line x1="713.5" y1="619.5" x2="713.5" y2="592.0" stroke="#ff3c3c"/>
<line x1="717.5" y1="619.5" x2="717.5" y2="587.1" stroke="#ff3c3c"/>
<line x1="721.5" y1="619.5" x2="721.5" y2="585.2" stroke="#ff3c3c"/>
<line x1="725.5" y1="619.5" x2="725.5" y2="587.1" stroke="#ff3c3c"/>
<line x1="729.5" y1="619.5" x2="729.5" y2="596.9" stroke="#ff3c3c"/>
<line x1="733.5" y1="619.5" x2="733.5" y2="604.3" stroke="#ff3c3c"/>
</g>
<polyline points="65.4,597.9 70.3,610.5 78.1,628.1 85.9,638.9 93.8,648.6 101.6,655.1 106.4,653.5 111.3,657.4 117.2,662.3 125.0,658.4 130.9,651.6 136.7,645.7 142.6,640.2 150.4,635.0 158.2,630.1 166.0,620.3 171.9,611.5 176.8,608.2 180.7,611.5 185.5,618.4 190.0,620.3 195.9,627.1 201.7,635.9 207.6,643.4 213.4,647.3 217.3,647.7 222.2,649.2 225.2,648.6 229.1,653.1 233.9,658.0 240.8,659.4 246.6,656.4 254.5,652.5 261.3,647.7 266.2,647.3 272.0,643.4 276.9,638.3 281.4,641.4 287.7,634.0 293.5,626.2 299.4,622.3 305.2,620.3 311.1,614.8 318.9,610.5 326.7,606.6 332.6,598.8 338.4,592.0 343.3,589.6 354.1,589.5 360.9,588.1 365.8,594.9 373.6,606.6 378.5,604.3 385.9,603.1 391.7,598.8 399.5,593.9 405.4,589.1 412.2,584.2 419.1,580.3 426.9,577.9 432.7,576.8 437.6,574.4 445.4,574.4 452.3,581.6 460.1,591.4 465.0,594.5 468.9,593.0 473.8,588.7 481.6,590.6 489.4,592.0 497.2,592.0 503.0,595.9 508.9,601.2 513.8,605.7 517.7,606.6 522.6,602.7 528.4,596.9 534.3,594.9 541.1,594.3 546.0,587.1 553.8,578.3 560.7,573.8 570.4,573.4 577.8,571.5 585.6,573.4 590.5,570.1 594.4,572.5 599.3,577.3 609.1,584.2 618.8,598.8 628.6,609.6 637.4,618.4 644.2,621.3 652.0,621.3 655.9,623.2 663.8,632.0 671.6,639.8 677.4,643.8 683.3,645.3 689.5,648.2 695.0,640.8 702.8,628.1 710.6,617.4 718.4,604.7 723.3,599.4 726.2,598.4 730.2,600.4 733.7,601.2" fill="none" stroke="#e8e8e8" stroke-width="1.2"/>
<polyline points="65.4,586.1 74.2,597.9 82.0,609.6 89.8,620.3 97.7,631.0 105.5,638.9 113.3,645.7 119.1,650.0 125.0,652.1 132.8,652.1 140.6,649.6 148.4,645.1 156.2,640.8 162.1,636.9 169.9,629.1 175.8,623.8 181.6,620.3 189.5,619.9 195.9,621.3 205.6,628.1 215.4,635.9 225.2,642.8 234.9,648.6 243.7,652.0 254.5,652.5 264.2,651.6 274.0,648.6 283.8,644.7 293.5,638.9 303.3,632.0 313.0,625.2 322.8,618.4 332.6,611.5 340.4,605.3 348.2,599.8 356.0,595.9 361.9,594.3 367.7,595.3 377.5,599.2 380.0,599.8 389.8,600.4 399.5,598.4 409.3,593.9 419.1,589.1 428.8,584.6 438.6,580.3 445.4,578.7 451.3,579.3 460.1,583.2 468.9,587.1 477.7,588.1 487.4,590.0 497.2,590.4 505.0,592.6 512.8,596.5 519.6,599.2 526.5,599.8 534.3,598.4 542.1,596.5 549.9,592.0 559.7,586.1 567.5,581.2 570.0,580.9 579.8,576.4 589.5,574.4 599.3,574.8 609.1,577.3 618.8,584.2 628.6,593.0 638.4,602.7 646.2,608.6 655.9,613.5 663.8,619.3 671.6,626.2 679.4,632.0 687.2,637.5 693.0,639.2 698.9,638.3 706.7,633.6 714.5,626.2 722.3,618.4 728.2,613.5 733.7,610.2" fill="none" stroke="#e8e800" stroke-width="1.2"/>
<line x1="65" y1="701.5" x2="734" y2="701.5" stroke="#0000ff" stroke-width="1" shape-rendering="crispEdges"/>
<line x1="65" y1="715.5" x2="734" y2="715.5" stroke="#00ff00" stroke-width="1" shape-rendering="crispEdges"/>
<line x1="65" y1="728.5" x2="734" y2="728.5" stroke="#ff00ff" stroke-width="1" shape-rendering="crispEdges"/>
<g shape-rendering="crispEdges">
<rect x="64.0" y="688.2" width="3" height="1.6" fill="#b40808"/>
<rect x="68.0" y="689.2" width="3" height="1.9" fill="#b40808"/>
<rect x="72.0" y="690.3" width="3" height="2.4" fill="#b40808"/>
<rect x="76.0" y="691.3" width="3" height="2.9" fill="#b40808"/>
<rect x="80.0" y="692.3" width="3" height="3.5" fill="#b40808"/>
<rect x="84.0" y="693.3" width="3" height="4.1" fill="#b40808"/>
<rect x="88.0" y="694.5" width="3" height="4.7" fill="#b40808"/>
<rect x="92.0" y="695.7" width="3" height="5.3" fill="#b40808"/>
<rect x="96.0" y="697.0" width="3" height="5.8" fill="#b40808"/>
<rect x="100.0" y="698.3" width="3" height="6.2" fill="#b40808"/>
<rect x="104.0" y="699.6" width="3" height="6.5" fill="#b40808"/>
<rect x="108.0" y="701.0" width="3" height="6.7" fill="#b40808"/>
<rect x="112.0" y="702.7" width="3" height="6.9" fill="#b40808"/>
<rect x="116.0" y="704.7" width="3" height="6.8" fill="#b40808"/>
<rect x="120.0" y="706.8" width="3" height="6.3" fill="#b40808"/>
<rect x="124.0" y="708.3" width="3" height="5.9" fill="#b40808"/>
<rect x="128.0" y="709.9" width="3" height="5.1" fill="#b40808"/>
<rect x="132.0" y="711.0" width="3" height="4.3" fill="#b40808"/>
<rect x="136.0" y="711.8" width="3" height="3.8" fill="#b40808"/>
<rect x="140.0" y="712.5" width="3" height="3.4" fill="#b40808"/>
<rect x="144.0" y="713.2" width="3" height="3.0" fill="#b40808"/>
<rect x="148.0" y="713.8" width="3" height="2.9" fill="#b40808"/>
<rect x="152.0" y="714.3" width="3" height="2.7" fill="#b40808"/>
<rect x="156.0" y="714.5" width="3" height="2.6" fill="#b40808"/>
<rect x="160.0" y="714.7" width="3" height="2.5" fill="#b40808"/>
<rect x="164.0" y="714.9" width="3" height="2.4" fill="#b40808"/>
<rect x="168.0" y="715.1" width="3" height="2.3" fill="#b40808"/>
<rect x="172.0" y="715.2" width="3" height="2.2" fill="#b40808"/>
<rect x="176.0" y="715.3" width="3" height="2.1" fill="#b40808"/>
<rect x="180.0" y="715.4" width="3" height="2.0" fill="#b40808"/>
<rect x="184.0" y="715.7" width="3" height="2.1" fill="#b40808"/>
<rect x="188.0" y="716.0" width="3" height="2.2" fill="#b40808"/>
<rect x="192.0" y="716.6" width="3" height="2.3" fill="#b40808"/>
<rect x="196.0" y="717.4" width="3" height="2.4" fill="#b40808"/>
<rect x="200.0" y="718.1" width="3" height="2.6" fill="#b40808"/>
<rect x="204.0" y="718.8" width="3" height="2.9" fill="#b40808"/>
<rect x="208.0" y="719.4" width="3" height="3.1" fill="#b40808"/>
<rect x="212.0" y="720.3" width="3" height="3.4" fill="#b40808"/>
<rect x="216.0" y="721.2" width="3" height="3.5" fill="#b40808"/>
<rect x="220.0" y="722.1" width="3" height="3.5" fill="#b40808"/>
<rect x="224.0" y="723.0" width="3" height="3.5" fill="#b40808"/>
<rect x="228.0" y="723.9" width="3" height="3.5" fill="#b40808"/>
<rect x="232.0" y="724.8" width="3" height="3.4" fill="#b40808"/>
<rect x="236.0" y="725.7" width="3" height="3.2" fill="#b40808"/>
<rect x="240.0" y="726.3" width="3" height="3.1" fill="#b40808"/>
<rect x="244.0" y="726.9" width="3" height="3.0" fill="#b40808"/>
<rect x="248.0" y="727.4" width="3" height="2.9" fill="#b40808"/>
<rect x="252.0" y="727.8" width="3" height="2.7" fill="#b40808"/>
<rect x="256.0" y="728.3" width="3" height="2.6" fill="#b40808"/>
<rect x="260.0" y="728.8" width="3" height="2.4" fill="#b40808"/>
<rect x="264.0" y="729.3" width="3" height="2.3" fill="#b40808"/>
<rect x="268.0" y="729.6" width="3" height="2.1" fill="#b40808"/>
<rect x="272.0" y="729.8" width="3" height="2.0" fill="#b40808"/>
<rect x="276.0" y="730.1" width="3" height="1.8" fill="#b40808"/>
<rect x="280.0" y="730.3" width="3" height="1.7" fill="#b40808"/>
<rect x="284.0" y="730.6" width="3" height="1.5" fill="#b40808"/>
</g>
<g shape-rendering="crispEdges">
<rect x="288.0" y="730.6" width="3" height="1.5" fill="#0808ff"/>
<rect x="292.0" y="730.2" width="3" height="1.7" fill="#0808ff"/>
<rect x="296.0" y="729.7" width="3" height="1.9" fill="#0808ff"/>
<rect x="300.0" y="729.1" width="3" height="2.1" fill="#0808ff"/>
<rect x="304.0" y="728.4" width="3" height="2.3" fill="#0808ff"/>
<rect x="308.0" y="727.7" width="3" height="2.5" fill="#0808ff"/>
<rect x="312.0" y="726.9" width="3" height="2.7" fill="#0808ff"/>
<rect x="316.0" y="726.1" width="3" height="2.9" fill="#0808ff"/>
<rect x="320.0" y="725.2" width="3" height="3.1" fill="#0808ff"/>
<rect x="324.0" y="724.4" width="3" height="3.5" fill="#0808ff"/>
<rect x="328.0" y="723.2" width="3" height="4.0" fill="#0808ff"/>
<rect x="332.0" y="721.6" width="3" height="4.3" fill="#0808ff"/>
<rect x="336.0" y="720.2" width="3" height="4.8" fill="#0808ff"/>
<rect x="340.0" y="719.0" width="3" height="5.0" fill="#0808ff"/>
<rect x="344.0" y="718.0" width="3" height="5.1" fill="#0808ff"/>
<rect x="348.0" y="717.2" width="3" height="5.2" fill="#0808ff"/>
<rect x="352.0" y="716.5" width="3" height="5.3" fill="#0808ff"/>
<rect x="356.0" y="715.7" width="3" height="5.4" fill="#0808ff"/>
<rect x="360.0" y="714.9" width="3" height="5.5" fill="#0808ff"/>
<rect x="364.0" y="714.2" width="3" height="5.4" fill="#0808ff"/>
<rect x="368.0" y="713.7" width="3" height="5.3" fill="#0808ff"/>
<rect x="372.0" y="713.2" width="3" height="5.2" fill="#0808ff"/>
<rect x="376.0" y="712.5" width="3" height="5.1" fill="#0808ff"/>
<rect x="380.0" y="711.8" width="3" height="5.0" fill="#0808ff"/>
<rect x="384.0" y="711.0" width="3" height="5.0" fill="#0808ff"/>
<rect x="388.0" y="710.3" width="3" height="5.0" fill="#0808ff"/>
<rect x="392.0" y="709.6" width="3" height="5.0" fill="#0808ff"/>
<rect x="396.0" y="708.6" width="3" height="5.0" fill="#0808ff"/>
<rect x="400.0" y="707.6" width="3" height="5.0" fill="#0808ff"/>
<rect x="404.0" y="706.6" width="3" height="5.0" fill="#0808ff"/>
<rect x="408.0" y="705.6" width="3" height="5.0" fill="#0808ff"/>
<rect x="412.0" y="704.6" width="3" height="5.0" fill="#0808ff"/>
<rect x="416.0" y="703.6" width="3" height="5.0" fill="#0808ff"/>
<rect x="420.0" y="702.7" width="3" height="5.0" fill="#0808ff"/>
<rect x="424.0" y="701.7" width="3" height="4.9" fill="#0808ff"/>
<rect x="428.0" y="700.7" width="3" height="4.8" fill="#0808ff"/>
<rect x="432.0" y="699.8" width="3" height="4.7" fill="#0808ff"/>
<rect x="436.0" y="698.8" width="3" height="4.6" fill="#0808ff"/>
<rect x="440.0" y="698.1" width="3" height="4.5" fill="#0808ff"/>
<rect x="444.0" y="697.6" width="3" height="4.4" fill="#0808ff"/>
<rect x="448.0" y="697.2" width="3" height="4.3" fill="#0808ff"/>
<rect x="452.0" y="696.7" width="3" height="4.2" fill="#0808ff"/>
<rect x="456.0" y="696.2" width="3" height="4.1" fill="#0808ff"/>
<rect x="460.0" y="695.8" width="3" height="4.0" fill="#0808ff"/>
<rect x="464.0" y="695.4" width="3" height="3.9" fill="#0808ff"/>
<rect x="468.0" y="694.9" width="3" height="3.8" fill="#0808ff"/>
<rect x="472.0" y="694.5" width="3" height="3.7" fill="#0808ff"/>
<rect x="476.0" y="694.0" width="3" height="3.6" fill="#0808ff"/>
<rect x="480.0" y="693.8" width="3" height="3.5" fill="#0808ff"/>
<rect x="484.0" y="693.5" width="3" height="3.4" fill="#0808ff"/>
<rect x="488.0" y="693.3" width="3" height="3.3" fill="#0808ff"/>
<rect x="492.0" y="693.0" width="3" height="3.2" fill="#0808ff"/>
<rect x="496.0" y="692.8" width="3" height="3.1" fill="#0808ff"/>
<rect x="500.0" y="692.6" width="3" height="3.0" fill="#0808ff"/>
<rect x="504.0" y="692.5" width="3" height="2.9" fill="#0808ff"/>
<rect x="508.0" y="692.3" width="3" height="2.8" fill="#0808ff"/>
<rect x="512.0" y="692.1" width="3" height="2.7" fill="#0808ff"/>
<rect x="516.0" y="692.1" width="3" height="2.6" fill="#0808ff"/>
<rect x="520.0" y="692.0" width="3" height="2.5" fill="#0808ff"/>
<rect x="524.0" y="691.9" width="3" height="2.5" fill="#0808ff"/>
<rect x="528.0" y="691.6" width="3" height="2.5" fill="#0808ff"/>
<rect x="532.0" y="691.3" width="3" height="2.5" fill="#0808ff"/>
<rect x="536.0" y="690.9" width="3" height="2.5" fill="#0808ff"/>
<rect x="540.0" y="690.5" width="3" height="2.5" fill="#0808ff"/>
<rect x="544.0" y="690.2" width="3" height="2.5" fill="#0808ff"/>
<rect x="548.0" y="689.8" width="3" height="2.5" fill="#0808ff"/>
<rect x="552.0" y="689.5" width="3" height="2.5" fill="#0808ff"/>
<rect x="556.0" y="689.2" width="3" height="2.5" fill="#0808ff"/>
<rect x="560.0" y="689.0" width="3" height="2.5" fill="#0808ff"/>
<rect x="564.0" y="688.8" width="3" height="2.4" fill="#0808ff"/>
<rect x="568.0" y="688.5" width="3" height="2.3" fill="#0808ff"/>
<rect x="572.0" y="688.2" width="3" height="2.2" fill="#0808ff"/>
<rect x="576.0" y="687.8" width="3" height="2.1" fill="#0808ff"/>
<rect x="580.0" y="687.6" width="3" height="2.0" fill="#0808ff"/>
<rect x="584.0" y="687.4" width="3" height="1.9" fill="#0808ff"/>
<rect x="588.0" y="687.2" width="3" height="1.8" fill="#0808ff"/>
<rect x="592.0" y="687.1" width="3" height="1.8" fill="#0808ff"/>
<rect x="596.0" y="687.2" width="3" height="1.7" fill="#0808ff"/>
<rect x="600.0" y="687.3" width="3" height="1.6" fill="#0808ff"/>
<rect x="604.0" y="687.4" width="3" height="1.6" fill="#0808ff"/>
<rect x="608.0" y="687.5" width="3" height="1.5" fill="#0808ff"/>
</g>
<g shape-rendering="crispEdges">
<rect x="612.0" y="688.0" width="3" height="1.5" fill="#b40808"/>
<rect x="616.0" y="688.4" width="3" height="1.8" fill="#b40808"/>
<rect x="620.0" y="688.8" width="3" height="2.0" fill="#b40808"/>
<rect x="624.0" y="689.3" width="3" height="2.2" fill="#b40808"/>
<rect x="628.0" y="689.8" width="3" height="2.5" fill="#b40808"/>
<rect x="632.0" y="690.4" width="3" height="2.6" fill="#b40808"/>
<rect x="636.0" y="691.0" width="3" height="2.8" fill="#b40808"/>
<rect x="640.0" y="691.5" width="3" height="2.9" fill="#b40808"/>
<rect x="644.0" y="692.1" width="3" height="3.0" fill="#b40808"/>
<rect x="648.0" y="692.6" width="3" height="3.3" fill="#b40808"/>
<rect x="652.0" y="693.5" width="3" height="3.6" fill="#b40808"/>
<rect x="656.0" y="694.3" width="3" height="3.8" fill="#b40808"/>
<rect x="660.0" y="695.2" width="3" height="4.1" fill="#b40808"/>
<rect x="664.0" y="696.3" width="3" height="4.4" fill="#b40808"/>
<rect x="668.0" y="697.3" width="3" height="4.6" fill="#b40808"/>
<rect x="672.0" y="698.4" width="3" height="4.9" fill="#b40808"/>
<rect x="676.0" y="699.5" width="3" height="5.0" fill="#b40808"/>
<rect x="680.0" y="700.7" width="3" height="5.0" fill="#b40808"/>
<rect x="684.0" y="701.8" width="3" height="5.0" fill="#b40808"/>
<rect x="688.0" y="702.8" width="3" height="5.0" fill="#b40808"/>
<rect x="692.0" y="704.0" width="3" height="4.7" fill="#b40808"/>
<rect x="696.0" y="704.4" width="3" height="4.2" fill="#b40808"/>
<rect x="700.0" y="704.9" width="3" height="3.8" fill="#b40808"/>
<rect x="704.0" y="705.4" width="3" height="3.2" fill="#b40808"/>
<rect x="708.0" y="705.7" width="3" height="2.6" fill="#b40808"/>
<rect x="712.0" y="706.0" width="3" height="1.9" fill="#b40808"/>
</g>
<g shape-rendering="crispEdges">
<rect x="716.0" y="705.8" width="3" height="1.5" fill="#0808ff"/>
<rect x="720.0" y="705.4" width="3" height="1.5" fill="#0808ff"/>
<rect x="724.0" y="705.2" width="3" height="1.5" fill="#0808ff"/>
<rect x="728.0" y="705.0" width="3" height="1.5" fill="#0808ff"/>
<rect x="732.0" y="704.9" width="3" height="1.5" fill="#0808ff"/>
</g>
<rect x="2.5" y="671.5" width="60" height="62" fill="none" stroke="#b0b0b0"/>
<text x="29" y="746.5" fill="#fff" font-size="13.5" font-family='"Liberation Mono","Noto Sans CJK SC",monospace' textLength="18" lengthAdjust="spacingAndGlyphs">240</text>
<text x="47" y="746.5" fill="#fff" font-size="12" font-family='"Liberation Sans","Noto Sans CJK SC",sans-serif'>分</text>
<text x="65" y="746.5" fill="#fff" font-size="13.5" font-family='"Liberation Mono","Noto Sans CJK SC",monospace' textLength="24" lengthAdjust="spacingAndGlyphs">0204</text>
<text x="135" y="746.5" fill="#fff" font-size="13.5" font-family='"Liberation Mono","Noto Sans CJK SC",monospace' textLength="12" lengthAdjust="spacingAndGlyphs">09</text>
<text x="208" y="746.5" fill="#fff" font-size="13.5" font-family='"Liberation Mono","Noto Sans CJK SC",monospace' textLength="12" lengthAdjust="spacingAndGlyphs">12</text>
<text x="280" y="746.5" fill="#fff" font-size="13.5" font-family='"Liberation Mono","Noto Sans CJK SC",monospace' textLength="12" lengthAdjust="spacingAndGlyphs">17</text>
<text x="351" y="746.5" fill="#fff" font-size="13.5" font-family='"Liberation Mono","Noto Sans CJK SC",monospace' textLength="12" lengthAdjust="spacingAndGlyphs">22</text>
<text x="423" y="746.5" fill="#fff" font-size="13.5" font-family='"Liberation Mono","Noto Sans CJK SC",monospace' textLength="12" lengthAdjust="spacingAndGlyphs">25</text>
<text x="489" y="746.5" fill="#fff" font-size="13.5" font-family='"Liberation Mono","Noto Sans CJK SC",monospace' textLength="24" lengthAdjust="spacingAndGlyphs">0302</text>
<text x="567" y="746.5" fill="#fff" font-size="13.5" font-family='"Liberation Mono","Noto Sans CJK SC",monospace' textLength="12" lengthAdjust="spacingAndGlyphs">05</text>
<text x="639" y="746.5" fill="#fff" font-size="13.5" font-family='"Liberation Mono","Noto Sans CJK SC",monospace' textLength="12" lengthAdjust="spacingAndGlyphs">10</text>
<text x="711" y="746.5" fill="#fff" font-size="13.5" font-family='"Liberation Mono","Noto Sans CJK SC",monospace' textLength="12" lengthAdjust="spacingAndGlyphs">15</text>
<rect x="632" y="331" width="155" height="54" fill="#fff"/>
<text x="633" y="344" fill="#ff0000" font-size="16" font-family='"Liberation Sans","Noto Sans CJK SC",sans-serif' font-weight="bold" textLength="50" lengthAdjust="spacingAndGlyphs">向上？</text>
<text x="684" y="344" fill="#ff0000" font-size="16" font-family='"Liberation Sans","Noto Sans CJK SC",sans-serif' font-weight="bold" textLength="50" lengthAdjust="spacingAndGlyphs">向下？</text>
<text x="825.5" y="66.5" fill="#e8e000" font-size="18" font-family='"Liberation Serif","Noto Serif CJK SC",serif' textLength="152.5" lengthAdjust="spacingAndGlyphs">欧元美元(EURUSD)</text>
<rect x="1004.5" y="50.5" width="15" height="13" fill="none" stroke="#58a0ff"/><rect x="1007.5" y="53.5" width="9" height="7" fill="none" stroke="#58a0ff"/><path d="M1007 53h10" stroke="#58a0ff" stroke-width="1.5"/>
<line x1="789" y1="72.5" x2="1021" y2="72.5" stroke="#c40000" stroke-width="1" shape-rendering="crispEdges"/>
<line x1="789" y1="72.5" x2="1021" y2="72.5" stroke="#ff1818" stroke-width="1" stroke-dasharray="1 1" shape-rendering="crispEdges"/>
<line x1="789" y1="93.5" x2="1021" y2="93.5" stroke="#c40000" stroke-width="1" shape-rendering="crispEdges"/>
<line x1="789" y1="93.5" x2="1021" y2="93.5" stroke="#ff1818" stroke-width="1" stroke-dasharray="1 1" shape-rendering="crispEdges"/>
<line x1="789" y1="114.5" x2="1021" y2="114.5" stroke="#c40000" stroke-width="1" shape-rendering="crispEdges"/>
<line x1="789" y1="114.5" x2="1021" y2="114.5" stroke="#ff1818" stroke-width="1" stroke-dasharray="1 1" shape-rendering="crispEdges"/>
<line x1="789" y1="235.5" x2="1021" y2="235.5" stroke="#c40000" stroke-width="1" shape-rendering="crispEdges"/>
<line x1="789" y1="235.5" x2="1021" y2="235.5" stroke="#ff1818" stroke-width="1" stroke-dasharray="1 1" shape-rendering="crispEdges"/>
<line x1="789" y1="256.5" x2="1021" y2="256.5" stroke="#c40000" stroke-width="1" shape-rendering="crispEdges"/>
<line x1="789" y1="256.5" x2="1021" y2="256.5" stroke="#ff1818" stroke-width="1" stroke-dasharray="1 1" shape-rendering="crispEdges"/>
<line x1="1020.5" y1="49" x2="1020.5" y2="750" stroke="#c40000" stroke-width="1" shape-rendering="crispEdges"/>
<line x1="1020.5" y1="49" x2="1020.5" y2="750" stroke="#ff1818" stroke-width="1" stroke-dasharray="1 1" shape-rendering="crispEdges"/>
<rect x="1022" y="49" width="2" height="701" fill="#9c9cb8"/>
<text x="793.3" y="87.5" fill="#fff" font-size="13" font-family='"Liberation Sans","Noto Sans CJK SC",sans-serif' textLength="25.0" lengthAdjust="spacingAndGlyphs">卖出</text>
<text x="894.2" y="87.7" fill="#00e000" font-size="14" font-family='"Liberation Sans","Noto Sans CJK SC",sans-serif' text-anchor="end" textLength="38.1" lengthAdjust="spacingAndGlyphs">1.3936</text>
<text transform="translate(1015.5,87.7) scale(0.89,1)" fill="#f0f000" font-size="14" font-family='"Liberation Sans","Noto Sans CJK SC",sans-serif' text-anchor="end">0</text>
<text x="793.3" y="108.6" fill="#fff" font-size="13" font-family='"Liberation Sans","Noto Sans CJK SC",sans-serif' textLength="25.0" lengthAdjust="spacingAndGlyphs">买入</text>
<text x="894.2" y="108.8" fill="#00e000" font-size="14" font-family='"Liberation Sans","Noto Sans CJK SC",sans-serif' text-anchor="end" textLength="38.1" lengthAdjust="spacingAndGlyphs">1.3932</text>
<text transform="translate(1015.5,108.8) scale(0.89,1)" fill="#f0f000" font-size="14" font-family='"Liberation Sans","Noto Sans CJK SC",sans-serif' text-anchor="end">0</text>
<text x="793.3" y="129.70000000000002" fill="#fff" font-size="13" font-family='"Liberation Sans","Noto Sans CJK SC",sans-serif' textLength="25.0" lengthAdjust="spacingAndGlyphs">最新</text>
<text x="894.2" y="129.9" fill="#00e000" font-size="14" font-family='"Liberation Sans","Noto Sans CJK SC",sans-serif' text-anchor="end" textLength="38.1" lengthAdjust="spacingAndGlyphs">1.3932</text>
<text x="915" y="129.70000000000002" fill="#fff" font-size="13" font-family='"Liberation Sans","Noto Sans CJK SC",sans-serif' textLength="25.0" lengthAdjust="spacingAndGlyphs">均价</text>
<text x="1015.5" y="129.9" fill="#f0f0f0" font-size="14" font-family='"Liberation Sans","Noto Sans CJK SC",sans-serif' text-anchor="end" textLength="38.1" lengthAdjust="spacingAndGlyphs">0.0000</text>
<text x="793.3" y="149.60000000000002" fill="#fff" font-size="13" font-family='"Liberation Sans","Noto Sans CJK SC",sans-serif' textLength="25.0" lengthAdjust="spacingAndGlyphs">涨跌</text>
<text x="894.2" y="149.8" fill="#00e000" font-size="14" font-family='"Liberation Sans","Noto Sans CJK SC",sans-serif' text-anchor="end" textLength="42.3" lengthAdjust="spacingAndGlyphs">-0.0058</text>
<text x="915" y="149.60000000000002" fill="#fff" font-size="13" font-family='"Liberation Sans","Noto Sans CJK SC",sans-serif' textLength="25.0" lengthAdjust="spacingAndGlyphs">昨收</text>
<text x="1015.5" y="149.8" fill="#f0f0f0" font-size="14" font-family='"Liberation Sans","Noto Sans CJK SC",sans-serif' text-anchor="end" textLength="38.1" lengthAdjust="spacingAndGlyphs">1.3990</text>
<text x="793.3" y="169.5" fill="#fff" font-size="13" font-family='"Liberation Sans","Noto Sans CJK SC",sans-serif' textLength="25.0" lengthAdjust="spacingAndGlyphs">幅度</text>
<text x="894.2" y="169.7" fill="#00e000" font-size="14" font-family='"Liberation Sans","Noto Sans CJK SC",sans-serif' text-anchor="end" textLength="39.5" lengthAdjust="spacingAndGlyphs">-0.41%</text>
<text x="915" y="169.5" fill="#fff" font-size="13" font-family='"Liberation Sans","Noto Sans CJK SC",sans-serif' textLength="25.0" lengthAdjust="spacingAndGlyphs">开盘</text>
<text x="1015.5" y="169.7" fill="#f0f0f0" font-size="14" font-family='"Liberation Sans","Noto Sans CJK SC",sans-serif' text-anchor="end" textLength="38.1" lengthAdjust="spacingAndGlyphs">1.3990</text>
<text x="793.3" y="189.4" fill="#fff" font-size="13" font-family='"Liberation Sans","Noto Sans CJK SC",sans-serif' textLength="25.0" lengthAdjust="spacingAndGlyphs">总手</text>
<text transform="translate(894.2,189.6) scale(0.89,1)" fill="#f0f000" font-size="14" font-family='"Liberation Sans","Noto Sans CJK SC",sans-serif' text-anchor="end">0</text>
<text x="915" y="189.4" fill="#fff" font-size="13" font-family='"Liberation Sans","Noto Sans CJK SC",sans-serif' textLength="25.0" lengthAdjust="spacingAndGlyphs">最高</text>
<text x="1015.5" y="189.6" fill="#ff3030" font-size="14" font-family='"Liberation Sans","Noto Sans CJK SC",sans-serif' text-anchor="end" textLength="38.1" lengthAdjust="spacingAndGlyphs">1.4000</text>
<text x="793.3" y="209.3" fill="#fff" font-size="13" font-family='"Liberation Sans","Noto Sans CJK SC",sans-serif' textLength="25.0" lengthAdjust="spacingAndGlyphs">现手</text>
<text transform="translate(894.2,209.5) scale(0.89,1)" fill="#f0f000" font-size="14" font-family='"Liberation Sans","Noto Sans CJK SC",sans-serif' text-anchor="end">0</text>
<text x="915" y="209.3" fill="#fff" font-size="13" font-family='"Liberation Sans","Noto Sans CJK SC",sans-serif' textLength="25.0" lengthAdjust="spacingAndGlyphs">最低</text>
<text x="1015.5" y="209.5" fill="#00e000" font-size="14" font-family='"Liberation Sans","Noto Sans CJK SC",sans-serif' text-anchor="end" textLength="38.1" lengthAdjust="spacingAndGlyphs">1.3893</text>
<text x="793.3" y="229.4" fill="#fff" font-size="13" font-family='"Liberation Sans","Noto Sans CJK SC",sans-serif' textLength="25.0" lengthAdjust="spacingAndGlyphs">金额</text>
<text x="894.2" y="229.6" fill="#f0f000" font-size="14" font-family='"Liberation Sans","Noto Sans CJK SC",sans-serif' text-anchor="end" textLength="24.2" lengthAdjust="spacingAndGlyphs">0.00</text>
<text x="915" y="229.4" fill="#fff" font-size="13" font-family='"Liberation Sans","Noto Sans CJK SC",sans-serif' textLength="25.0" lengthAdjust="spacingAndGlyphs">量比</text>
<text x="1015.5" y="229.6" fill="#f0f0f0" font-size="14" font-family='"Liberation Sans","Noto Sans CJK SC",sans-serif' text-anchor="end" textLength="24.2" lengthAdjust="spacingAndGlyphs">1.00</text>
<text x="794" y="250.5" fill="#fff" font-size="13" font-family='"Liberation Sans","Noto Sans CJK SC",sans-serif' textLength="25.0" lengthAdjust="spacingAndGlyphs">外盘</text>
<text x="915" y="250.5" fill="#fff" font-size="13" font-family='"Liberation Sans","Noto Sans CJK SC",sans-serif' textLength="25.0" lengthAdjust="spacingAndGlyphs">内盘</text>
<path d="M883 247.5h11" stroke="#ff2020" stroke-width="1.2" stroke-dasharray="3 1"/>
<path d="M1004.5 247.5h11" stroke="#00e000" stroke-width="1.2" stroke-dasharray="3 1"/>
<text x="794.5" y="272.8" fill="#8c8c8c" font-size="13" font-family='"Liberation Sans","Noto Sans CJK SC",sans-serif' textLength="25.0" lengthAdjust="spacingAndGlyphs">北京</text>
<text x="891" y="272.8" fill="#8c8c8c" font-size="13" font-family='"Liberation Sans","Noto Sans CJK SC",sans-serif' textLength="25.0" lengthAdjust="spacingAndGlyphs">价格</text>
<text x="974" y="272.8" fill="#8c8c8c" font-size="13" font-family='"Liberation Sans","Noto Sans CJK SC",sans-serif' textLength="25.0" lengthAdjust="spacingAndGlyphs">现手</text>
<text x="794.3" y="295.2" fill="#f0f0f0" font-size="14" font-family='"Liberation Sans","Noto Sans CJK SC",sans-serif' textLength="30.1" lengthAdjust="spacingAndGlyphs">16:41</text>
<text x="878.3" y="295.2" fill="#00e000" font-size="14" font-family='"Liberation Sans","Noto Sans CJK SC",sans-serif' textLength="37.5" lengthAdjust="spacingAndGlyphs">1.3934</text>
<text transform="translate(998.8,295.2) scale(0.86,1)" fill="#f0f0f0" font-size="14" font-family='"Liberation Sans","Noto Sans CJK SC",sans-serif' text-anchor="end">0</text>
<text x="794.3" y="317.16999999999996" fill="#f0f0f0" font-size="14" font-family='"Liberation Sans","Noto Sans CJK SC",sans-serif' textLength="30.1" lengthAdjust="spacingAndGlyphs">16:41</text>
<text x="878.3" y="317.16999999999996" fill="#00e000" font-size="14" font-family='"Liberation Sans","Noto Sans CJK SC",sans-serif' textLength="37.5" lengthAdjust="spacingAndGlyphs">1.3935</text>
<text transform="translate(998.8,317.16999999999996) scale(0.86,1)" fill="#00e000" font-size="14" font-family='"Liberation Sans","Noto Sans CJK SC",sans-serif' text-anchor="end">0</text>
<text x="794.3" y="339.14" fill="#f0f0f0" font-size="14" font-family='"Liberation Sans","Noto Sans CJK SC",sans-serif' textLength="30.1" lengthAdjust="spacingAndGlyphs">16:42</text>
<text x="878.3" y="339.14" fill="#00e000" font-size="14" font-family='"Liberation Sans","Noto Sans CJK SC",sans-serif' textLength="37.5" lengthAdjust="spacingAndGlyphs">1.3934</text>
<text transform="translate(998.8,339.14) scale(0.86,1)" fill="#00e000" font-size="14" font-family='"Liberation Sans","Noto Sans CJK SC",sans-serif' text-anchor="end">0</text>
<text x="794.3" y="361.11" fill="#f0f0f0" font-size="14" font-family='"Liberation Sans","Noto Sans CJK SC",sans-serif' textLength="30.1" lengthAdjust="spacingAndGlyphs">16:42</text>
<text x="878.3" y="361.11" fill="#00e000" font-size="14" font-family='"Liberation Sans","Noto Sans CJK SC",sans-serif' textLength="37.5" lengthAdjust="spacingAndGlyphs">1.3935</text>
<text transform="translate(998.8,361.11) scale(0.86,1)" fill="#f0f0f0" font-size="14" font-family='"Liberation Sans","Noto Sans CJK SC",sans-serif' text-anchor="end">0</text>
<text x="794.3" y="383.08" fill="#f0f0f0" font-size="14" font-family='"Liberation Sans","Noto Sans CJK SC",sans-serif' textLength="30.1" lengthAdjust="spacingAndGlyphs">16:42</text>
<text x="878.3" y="383.08" fill="#00e000" font-size="14" font-family='"Liberation Sans","Noto Sans CJK SC",sans-serif' textLength="37.5" lengthAdjust="spacingAndGlyphs">1.3935</text>
<text transform="translate(998.8,383.08) scale(0.86,1)" fill="#f0f0f0" font-size="14" font-family='"Liberation Sans","Noto Sans CJK SC",sans-serif' text-anchor="end">0</text>
<text x="794.3" y="405.04999999999995" fill="#f0f0f0" font-size="14" font-family='"Liberation Sans","Noto Sans CJK SC",sans-serif' textLength="30.1" lengthAdjust="spacingAndGlyphs">16:42</text>
<text x="878.3" y="405.04999999999995" fill="#00e000" font-size="14" font-family='"Liberation Sans","Noto Sans CJK SC",sans-serif' textLength="37.5" lengthAdjust="spacingAndGlyphs">1.3934</text>
<text transform="translate(998.8,405.04999999999995) scale(0.86,1)" fill="#00e000" font-size="14" font-family='"Liberation Sans","Noto Sans CJK SC",sans-serif' text-anchor="end">0</text>
<text x="794.3" y="427.02" fill="#f0f0f0" font-size="14" font-family='"Liberation Sans","Noto Sans CJK SC",sans-serif' textLength="30.1" lengthAdjust="spacingAndGlyphs">16:42</text>
<text x="878.3" y="427.02" fill="#00e000" font-size="14" font-family='"Liberation Sans","Noto Sans CJK SC",sans-serif' textLength="37.5" lengthAdjust="spacingAndGlyphs">1.3935</text>
<text transform="translate(998.8,427.02) scale(0.86,1)" fill="#f0f0f0" font-size="14" font-family='"Liberation Sans","Noto Sans CJK SC",sans-serif' text-anchor="end">0</text>
<text x="794.3" y="448.99" fill="#f0f0f0" font-size="14" font-family='"Liberation Sans","Noto Sans CJK SC",sans-serif' textLength="30.1" lengthAdjust="spacingAndGlyphs">16:42</text>
<text x="878.3" y="448.99" fill="#00e000" font-size="14" font-family='"Liberation Sans","Noto Sans CJK SC",sans-serif' textLength="37.5" lengthAdjust="spacingAndGlyphs">1.3934</text>
<text transform="translate(998.8,448.99) scale(0.86,1)" fill="#00e000" font-size="14" font-family='"Liberation Sans","Noto Sans CJK SC",sans-serif' text-anchor="end">0</text>
<text x="794.3" y="470.96" fill="#f0f0f0" font-size="14" font-family='"Liberation Sans","Noto Sans CJK SC",sans-serif' textLength="30.1" lengthAdjust="spacingAndGlyphs">16:43</text>
<text x="878.3" y="470.96" fill="#00e000" font-size="14" font-family='"Liberation Sans","Noto Sans CJK SC",sans-serif' textLength="37.5" lengthAdjust="spacingAndGlyphs">1.3934</text>
<text transform="translate(998.8,470.96) scale(0.86,1)" fill="#00e000" font-size="14" font-family='"Liberation Sans","Noto Sans CJK SC",sans-serif' text-anchor="end">0</text>
<text x="794.3" y="492.92999999999995" fill="#f0f0f0" font-size="14" font-family='"Liberation Sans","Noto Sans CJK SC",sans-serif' textLength="30.1" lengthAdjust="spacingAndGlyphs">16:43</text>
<text x="878.3" y="492.92999999999995" fill="#00e000" font-size="14" font-family='"Liberation Sans","Noto Sans CJK SC",sans-serif' textLength="37.5" lengthAdjust="spacingAndGlyphs">1.3935</text>
<text transform="translate(998.8,492.92999999999995) scale(0.86,1)" fill="#f0f0f0" font-size="14" font-family='"Liberation Sans","Noto Sans CJK SC",sans-serif' text-anchor="end">0</text>
<text x="794.3" y="514.9" fill="#f0f0f0" font-size="14" font-family='"Liberation Sans","Noto Sans CJK SC",sans-serif' textLength="30.1" lengthAdjust="spacingAndGlyphs">16:43</text>
<text x="878.3" y="514.9" fill="#00e000" font-size="14" font-family='"Liberation Sans","Noto Sans CJK SC",sans-serif' textLength="37.5" lengthAdjust="spacingAndGlyphs">1.3935</text>
<text transform="translate(998.8,514.9) scale(0.86,1)" fill="#f0f0f0" font-size="14" font-family='"Liberation Sans","Noto Sans CJK SC",sans-serif' text-anchor="end">0</text>
<text x="794.3" y="536.87" fill="#f0f0f0" font-size="14" font-family='"Liberation Sans","Noto Sans CJK SC",sans-serif' textLength="30.1" lengthAdjust="spacingAndGlyphs">16:43</text>
<text x="878.3" y="536.87" fill="#00e000" font-size="14" font-family='"Liberation Sans","Noto Sans CJK SC",sans-serif' textLength="37.5" lengthAdjust="spacingAndGlyphs">1.3934</text>
<text transform="translate(998.8,536.87) scale(0.86,1)" fill="#00e000" font-size="14" font-family='"Liberation Sans","Noto Sans CJK SC",sans-serif' text-anchor="end">0</text>
<text x="794.3" y="558.8399999999999" fill="#f0f0f0" font-size="14" font-family='"Liberation Sans","Noto Sans CJK SC",sans-serif' textLength="30.1" lengthAdjust="spacingAndGlyphs">16:43</text>
<text x="878.3" y="558.8399999999999" fill="#00e000" font-size="14" font-family='"Liberation Sans","Noto Sans CJK SC",sans-serif' textLength="37.5" lengthAdjust="spacingAndGlyphs">1.3935</text>
<text transform="translate(998.8,558.8399999999999) scale(0.86,1)" fill="#00e000" font-size="14" font-family='"Liberation Sans","Noto Sans CJK SC",sans-serif' text-anchor="end">0</text>
<text x="794.3" y="580.81" fill="#f0f0f0" font-size="14" font-family='"Liberation Sans","Noto Sans CJK SC",sans-serif' textLength="30.1" lengthAdjust="spacingAndGlyphs">16:43</text>
<text x="878.3" y="580.81" fill="#00e000" font-size="14" font-family='"Liberation Sans","Noto Sans CJK SC",sans-serif' textLength="37.5" lengthAdjust="spacingAndGlyphs">1.3934</text>
<text transform="translate(998.8,580.81) scale(0.86,1)" fill="#00e000" font-size="14" font-family='"Liberation Sans","Noto Sans CJK SC",sans-serif' text-anchor="end">0</text>
<text x="794.3" y="602.78" fill="#f0f0f0" font-size="14" font-family='"Liberation Sans","Noto Sans CJK SC",sans-serif' textLength="30.1" lengthAdjust="spacingAndGlyphs">16:43</text>
<text x="878.3" y="602.78" fill="#00e000" font-size="14" font-family='"Liberation Sans","Noto Sans CJK SC",sans-serif' textLength="37.5" lengthAdjust="spacingAndGlyphs">1.3935</text>
<text transform="translate(998.8,602.78) scale(0.86,1)" fill="#f0f0f0" font-size="14" font-family='"Liberation Sans","Noto Sans CJK SC",sans-serif' text-anchor="end">0</text>
<text x="794.3" y="624.75" fill="#f0f0f0" font-size="14" font-family='"Liberation Sans","Noto Sans CJK SC",sans-serif' textLength="30.1" lengthAdjust="spacingAndGlyphs">16:44</text>
<text x="878.3" y="624.75" fill="#00e000" font-size="14" font-family='"Liberation Sans","Noto Sans CJK SC",sans-serif' textLength="37.5" lengthAdjust="spacingAndGlyphs">1.3934</text>
<text transform="translate(998.8,624.75) scale(0.86,1)" fill="#00e000" font-size="14" font-family='"Liberation Sans","Noto Sans CJK SC",sans-serif' text-anchor="end">0</text>
<text x="794.3" y="646.72" fill="#f0f0f0" font-size="14" font-family='"Liberation Sans","Noto Sans CJK SC",sans-serif' textLength="30.1" lengthAdjust="spacingAndGlyphs">16:44</text>
<text x="878.3" y="646.72" fill="#00e000" font-size="14" font-family='"Liberation Sans","Noto Sans CJK SC",sans-serif' textLength="37.5" lengthAdjust="spacingAndGlyphs">1.3935</text>
<text transform="translate(998.8,646.72) scale(0.86,1)" fill="#f0f0f0" font-size="14" font-family='"Liberation Sans","Noto Sans CJK SC",sans-serif' text-anchor="end">0</text>
<text x="794.3" y="668.69" fill="#f0f0f0" font-size="14" font-family='"Liberation Sans","Noto Sans CJK SC",sans-serif' textLength="30.1" lengthAdjust="spacingAndGlyphs">16:44</text>
<text x="878.3" y="668.69" fill="#00e000" font-size="14" font-family='"Liberation Sans","Noto Sans CJK SC",sans-serif' textLength="37.5" lengthAdjust="spacingAndGlyphs">1.3934</text>
<text transform="translate(998.8,668.69) scale(0.86,1)" fill="#00e000" font-size="14" font-family='"Liberation Sans","Noto Sans CJK SC",sans-serif' text-anchor="end">0</text>
<text x="794.3" y="690.66" fill="#f0f0f0" font-size="14" font-family='"Liberation Sans","Noto Sans CJK SC",sans-serif' textLength="30.1" lengthAdjust="spacingAndGlyphs">16:44</text>
<text x="878.3" y="690.66" fill="#00e000" font-size="14" font-family='"Liberation Sans","Noto Sans CJK SC",sans-serif' textLength="37.5" lengthAdjust="spacingAndGlyphs">1.3935</text>
<text transform="translate(998.8,690.66) scale(0.86,1)" fill="#ff3030" font-size="14" font-family='"Liberation Sans","Noto Sans CJK SC",sans-serif' text-anchor="end">0</text>
<text x="794.3" y="712.6299999999999" fill="#f0f0f0" font-size="14" font-family='"Liberation Sans","Noto Sans CJK SC",sans-serif' textLength="30.1" lengthAdjust="spacingAndGlyphs">16:44</text>
<text x="878.3" y="712.6299999999999" fill="#00e000" font-size="14" font-family='"Liberation Sans","Noto Sans CJK SC",sans-serif' textLength="37.5" lengthAdjust="spacingAndGlyphs">1.3934</text>
<text transform="translate(998.8,712.6299999999999) scale(0.86,1)" fill="#ff3030" font-size="14" font-family='"Liberation Sans","Noto Sans CJK SC",sans-serif' text-anchor="end">0</text>
<text x="794.3" y="734.5999999999999" fill="#f0f0f0" font-size="14" font-family='"Liberation Sans","Noto Sans CJK SC",sans-serif' textLength="30.1" lengthAdjust="spacingAndGlyphs">16:44</text>
<text x="878.3" y="734.5999999999999" fill="#00e000" font-size="14" font-family='"Liberation Sans","Noto Sans CJK SC",sans-serif' textLength="37.5" lengthAdjust="spacingAndGlyphs">1.3932</text>
<text transform="translate(998.8,734.5999999999999) scale(0.86,1)" fill="#ff3030" font-size="14" font-family='"Liberation Sans","Noto Sans CJK SC",sans-serif' text-anchor="end">0</text>
<rect x="1004" y="257" width="17" height="484" fill="#ffffff"/>
<rect x="1004" y="257" width="17" height="484" fill="url(#dotsw)"/>
<rect x="1004.5" y="257.5" width="16" height="16" rx="2" fill="#c4ccf8" stroke="#e8ecff"/><path d="M1008.5 268l4-4 4 4" fill="none" stroke="#384878" stroke-width="2"/>
<rect x="1004.5" y="724.5" width="16" height="16" rx="2" fill="#c4ccf8" stroke="#e8ecff"/><path d="M1008.5 730l4 4 4-4" fill="none" stroke="#384878" stroke-width="2"/>
<rect x="1005.5" y="708.5" width="14" height="14" rx="2" fill="#c0c8f4" stroke="#a0a8e0"/><path d="M1009 712.5h7M1009 714.5h7M1009 716.5h7M1009 718.5h7" stroke="#e8ecff" stroke-width="1"/>
<rect x="910" y="267" width="83.5" height="282" fill="#7c84dc"/>
<rect x="911" y="268" width="81.5" height="19.5" fill="url(#gtb)"/>
<rect x="911" y="268" width="81.5" height="19.5" fill="url(#dots4)" opacity="0.25"/>
<rect x="913.3" y="287.5" width="77" height="258.5" fill="#f0eed6"/>
<rect x="913.3" y="287.5" width="77" height="258.5" fill="url(#dotsb)" opacity="0.5"/>
<text x="914" y="283.3" fill="#fff" font-size="11.5" font-family='"Liberation Sans","Noto Sans CJK SC",sans-serif' font-weight="bold" textLength="23.5" lengthAdjust="spacingAndGlyphs">画线</text>
<rect x="975.7" y="272.6" width="11.8" height="11.8" fill="#c0506c" stroke="#f0e8f0" stroke-width="1"/><path d="M978.3 275.2l6.6 6.6M984.9 275.2l-6.6 6.6" stroke="#fff" stroke-width="1.8"/>
<rect x="913.8" y="288" width="23.7" height="24.7" fill="#f4f2e8" stroke="#a8a8a0" stroke-width="0.8"/>
<line x1="920.5" y1="295.5" x2="932.2" y2="306.9" stroke="#101010" stroke-width="1.1"/>
<line x1="946.9" y1="295.7" x2="957.0" y2="306.3" stroke="#101010" stroke-width="1.1"/>
<circle cx="946.9" cy="295.7" r="1.2" fill="#101010"/>
<circle cx="957.0" cy="306.3" r="1.2" fill="#101010"/>
<line x1="972.3" y1="298.0" x2="981.0" y2="306.5" stroke="#101010" stroke-width="1.1"/>
<line x1="977.0" y1="295.0" x2="984.4" y2="302.0" stroke="#101010" stroke-width="1.1"/>
<line x1="919.5" y1="327.4" x2="932.8" y2="327.4" stroke="#101010" stroke-width="1.1"/>
<line x1="919.5" y1="325.5" x2="919.5" y2="329.5" stroke="#101010" stroke-width="1.4"/>
<line x1="951.4" y1="320.5" x2="951.4" y2="333.8" stroke="#101010" stroke-width="1.1"/>
<line x1="949.6" y1="320.5" x2="953.2" y2="320.5" stroke="#101010" stroke-width="1.4"/>
<rect x="973.5" y="323" width="9.5" height="7.5" fill="none" stroke="#101010" stroke-width="1.1"/>
<line x1="921.0" y1="357.7" x2="932.2" y2="346.9" stroke="#101010" stroke-width="1.1"/>
<circle cx="921.0" cy="357.7" r="1.2" fill="#101010"/>
<line x1="946.9" y1="347.9" x2="958.0" y2="358.6" stroke="#101010" stroke-width="1.1"/>
<circle cx="946.9" cy="347.9" r="1.2" fill="#101010"/>
<path d="M973.5 352q1.5-7 4.5 0.8t4.5 0.8q0.4-2-0.4-3.5" fill="none" stroke="#101010" stroke-width="1.1"/>
<path d="M921 374.3h5.5a4.4 4.4 0 0 1 0 8.8h-5.5" fill="none" stroke="#101010" stroke-width="1.1"/>
<line x1="946.0" y1="384.0" x2="958.0" y2="372.5" stroke="#101010" stroke-width="1.1"/>
<line x1="946.0" y1="384.0" x2="958.0" y2="384.0" stroke="#101010" stroke-width="1.1"/>
<line x1="946.0" y1="384.0" x2="958.0" y2="378.5" stroke="#1850c0" stroke-width="1.1"/>
<line x1="946.0" y1="384.0" x2="958.0" y2="381.5" stroke="#1850c0" stroke-width="1.1"/>
<line x1="972.0" y1="384.0" x2="972.0" y2="372.0" stroke="#1850c0" stroke-width="1.1"/>
<line x1="972.0" y1="384.0" x2="977.0" y2="372.0" stroke="#1850c0" stroke-width="1.1"/>
<line x1="972.0" y1="384.0" x2="982.0" y2="373.0" stroke="#1850c0" stroke-width="1.1"/>
<line x1="972.0" y1="384.0" x2="984.0" y2="377.0" stroke="#1850c0" stroke-width="1.1"/>
<line x1="972.0" y1="384.0" x2="984.0" y2="381.0" stroke="#1850c0" stroke-width="1.1"/>
<line x1="972.0" y1="372.0" x2="972.0" y2="384.0" stroke="#101010" stroke-width="1.1"/>
<line x1="972.0" y1="384.0" x2="984.0" y2="384.0" stroke="#101010" stroke-width="1.1"/>
<line x1="924.4" y1="401.5" x2="932.4" y2="401.5" stroke="#1850c0" stroke-width="1.2"/>
<line x1="924.4" y1="404.1" x2="932.4" y2="404.1" stroke="#1850c0" stroke-width="1.2"/>
<line x1="924.4" y1="406.7" x2="932.4" y2="406.7" stroke="#1850c0" stroke-width="1.2"/>
<line x1="924.4" y1="409.3" x2="932.4" y2="409.3" stroke="#1850c0" stroke-width="1.2"/>
<line x1="918.4" y1="410.0" x2="932.4" y2="410.0" stroke="#1850c0" stroke-width="1.2"/>
<line x1="950.8" y1="401.5" x2="958.8" y2="401.5" stroke="#1850c0" stroke-width="1.2"/>
<line x1="950.8" y1="404.1" x2="958.8" y2="404.1" stroke="#1850c0" stroke-width="1.2"/>
<line x1="950.8" y1="406.7" x2="958.8" y2="406.7" stroke="#1850c0" stroke-width="1.2"/>
<line x1="950.8" y1="409.3" x2="958.8" y2="409.3" stroke="#1850c0" stroke-width="1.2"/>
<line x1="944.8" y1="410.0" x2="958.8" y2="410.0" stroke="#1850c0" stroke-width="1.2"/>
<line x1="977.1" y1="401.5" x2="985.1" y2="401.5" stroke="#1850c0" stroke-width="1.2"/>
<line x1="977.1" y1="404.1" x2="985.1" y2="404.1" stroke="#1850c0" stroke-width="1.2"/>
<line x1="977.1" y1="406.7" x2="985.1" y2="406.7" stroke="#1850c0" stroke-width="1.2"/>
<line x1="977.1" y1="409.3" x2="985.1" y2="409.3" stroke="#1850c0" stroke-width="1.2"/>
<line x1="971.1" y1="410.0" x2="985.1" y2="410.0" stroke="#1850c0" stroke-width="1.2"/>
<text x="917.9" y="408.5" fill="#1850c0" font-size="8" font-family='"Liberation Sans","Noto Sans CJK SC",sans-serif' font-weight="bold">G</text>
<line x1="944.8" y1="402.0" x2="949.8" y2="407.0" stroke="#1850c0" stroke-width="1.3"/>
<line x1="949.8" y1="402.0" x2="944.8" y2="407.0" stroke="#1850c0" stroke-width="1.3"/>
<line x1="971.1" y1="402.0" x2="976.1" y2="407.0" stroke="#1850c0" stroke-width="1.3"/>
<line x1="976.1" y1="402.0" x2="971.1" y2="407.0" stroke="#1850c0" stroke-width="1.3"/>
<line x1="919.5" y1="423.5" x2="919.5" y2="437.0" stroke="#1850c0" stroke-width="1.1"/>
<line x1="923.1" y1="423.5" x2="923.1" y2="437.0" stroke="#1850c0" stroke-width="1.1"/>
<line x1="926.7" y1="423.5" x2="926.7" y2="437.0" stroke="#1850c0" stroke-width="1.1"/>
<line x1="930.3" y1="423.5" x2="930.3" y2="437.0" stroke="#101010" stroke-width="1.1"/>
<line x1="945.0" y1="423.5" x2="945.0" y2="437.0" stroke="#1850c0" stroke-width="1.1"/>
<line x1="948.2" y1="423.5" x2="948.2" y2="437.0" stroke="#1850c0" stroke-width="1.1"/>
<line x1="951.4" y1="423.5" x2="951.4" y2="437.0" stroke="#1850c0" stroke-width="1.1"/>
<line x1="954.6" y1="423.5" x2="954.6" y2="437.0" stroke="#1850c0" stroke-width="1.1"/>
<line x1="957.8" y1="423.5" x2="957.8" y2="437.0" stroke="#101010" stroke-width="1.1"/>
<line x1="972.0" y1="426.0" x2="972.0" y2="437.5" stroke="#101010" stroke-width="1.1"/>
<line x1="984.0" y1="423.0" x2="984.0" y2="434.5" stroke="#101010" stroke-width="1.1"/>
<line x1="972.0" y1="428.0" x2="984.0" y2="424.5" stroke="#101010" stroke-width="1.1"/>
<line x1="972.0" y1="432.0" x2="984.0" y2="428.5" stroke="#1850c0" stroke-width="1.1"/>
<line x1="972.0" y1="436.0" x2="984.0" y2="432.5" stroke="#1850c0" stroke-width="1.1"/>
<line x1="920.0" y1="450.0" x2="920.0" y2="463.0" stroke="#101010" stroke-width="1.1"/>
<line x1="927.0" y1="449.0" x2="927.0" y2="462.0" stroke="#101010" stroke-width="1.1"/>
<line x1="920.0" y1="455.0" x2="931.0" y2="451.5" stroke="#101010" stroke-width="1.1"/>
<line x1="920.0" y1="460.0" x2="931.0" y2="456.5" stroke="#1850c0" stroke-width="1.1"/>
<text x="951.75" y="462.5" fill="#181818" font-size="17" font-family='"Liberation Sans","Noto Sans CJK SC",sans-serif' text-anchor="middle">A</text>
<text x="952.4" y="462.5" fill="#e08020" font-size="17" font-family='"Liberation Sans","Noto Sans CJK SC",sans-serif' text-anchor="middle" opacity="0.35">A</text>
<circle cx="978.1" cy="456.3" r="6.6" fill="#e8e8f0" stroke="#3040a0" stroke-width="0.8"/><circle cx="978.1" cy="456.3" r="4.6" fill="none" stroke="#e03030" stroke-width="2.6" stroke-dasharray="1.6 1.3"/><circle cx="978.1" cy="456.3" r="2" fill="#c0c8d8"/>
<path transform="translate(925.4,484) rotate(0)" d="M0 -6.5l5.5 6h-3v5.5h-5v-5.5h-3z" fill="#f03020" stroke="#801008" stroke-width="0.8"/>
<path transform="translate(951.75,483.5) rotate(45)" d="M0 -6.5l5.5 6h-3v5.5h-5v-5.5h-3z" fill="#f02020" stroke="#600808" stroke-width="0.8"/>
<path transform="translate(978.1,483.5) rotate(-45)" d="M0 -6.5l5.5 6h-3v5.5h-5v-5.5h-3z" fill="#f02020" stroke="#600808" stroke-width="0.8"/>
<path transform="translate(925.4,509) rotate(180)" d="M0 -6.5l5.5 6h-3v5.5h-5v-5.5h-3z" fill="#58b030" stroke="#285810" stroke-width="0.8"/>
<path transform="translate(951.75,509.5) rotate(135)" d="M0 -6.5l5.5 6h-3v5.5h-5v-5.5h-3z" fill="#58b030" stroke="#285810" stroke-width="0.8"/>
<path transform="translate(978.1,509.5) rotate(-135)" d="M0 -6.5l5.5 6h-3v5.5h-5v-5.5h-3z" fill="#58b030" stroke="#285810" stroke-width="0.8"/>
<path d="M919 537.5l7-6.5h7l-7 6.5z" fill="#f8e838" stroke="#806800" stroke-width="0.7"/><path d="M919 537.5h7v2.5h-7z" fill="#e0c820" stroke="#806800" stroke-width="0.7"/><path d="M926 537.5l7-6.5v2.5l-7 6.5z" fill="#c0a810" stroke="#806800" stroke-width="0.7"/><path d="M927 541h6" stroke="#606060" stroke-width="1.4"/>
<path d="M959 533.5l4.5-3.8v2.4h4v2.8h-4v2.4z" fill="#1858d0"/><rect x="959.5" y="538" width="6" height="3" fill="#e02020"/>
<rect x="968" y="529.5" width="3" height="1.6" fill="#e02020"/>
<rect x="968" y="532.0" width="3" height="1.6" fill="#101010"/>
<rect x="968" y="534.5" width="3" height="1.6" fill="#e02020"/>
<rect x="968" y="537.0" width="3" height="1.6" fill="#101010"/>
<rect x="968" y="539.5" width="3" height="1.6" fill="#e02020"/>
<rect x="807.5" y="663.5" width="143" height="21" rx="1.5" fill="#f6f8ff" stroke="#d0d8f4"/>
<rect x="810.5" y="665.5" width="17" height="17" rx="4" fill="#38b848" stroke="#d8f0d8" stroke-width="1" transform="rotate(-8 819 674)"/>
<text x="819" y="679.5" fill="#fff" font-size="15" font-family='"Liberation Sans","Noto Sans CJK SC",sans-serif' text-anchor="middle" font-weight="bold">S</text>
<text x="832" y="680" fill="#3878c8" font-size="15" font-family='"Liberation Sans","Noto Sans CJK SC",sans-serif'>五</text>
<path d="M862.5 666.5a7.2 7.2 0 1 1-8.8 11a9 9 0 0 0 8.8-11z" fill="#4080d0"/>
<circle cx="878" cy="670.5" r="1.8" fill="none" stroke="#4080d0" stroke-width="1.1"/><path d="M883 676.5q1 2.5-1.2 4" fill="none" stroke="#4080d0" stroke-width="1.6"/>
<rect x="890.5" y="668" width="18" height="12" rx="1.5" fill="#4888d8"/><path d="M892.5 671h14M892.5 674h14" stroke="#e8f0ff" stroke-width="1.4" stroke-dasharray="2 1"/><path d="M895 677.3h9" stroke="#e8f0ff" stroke-width="1.4"/>
<circle cx="920.3" cy="670.5" r="3.3" fill="#a8a8a8"/><path d="M914.5 680.5q0-6 5.8-6t5.8 6z" fill="#a8a8a8"/>
<path d="M935 680l6.5-6.5" stroke="#3878d0" stroke-width="3" stroke-linecap="round"/><path d="M946.8 668.2l-2.6 2.6-1.8-1.8 2.6-2.6a4 4 0 1 0 1.8 1.8z" fill="#3878d0"/>
<rect x="0" y="750" width="1024" height="2" fill="#d4d4d8"/>
<rect x="0" y="752" width="1024" height="1" fill="#505058"/>
<rect x="0" y="753" width="1024" height="15" fill="#d0d0f6"/>
<rect x="0" y="753" width="1024" height="15" fill="url(#dots2)" opacity="0.8"/>
<rect x="0" y="767" width="1024" height="1" fill="#9098c8"/>
<text x="1.5" y="764.3" fill="#0000ff" font-size="12" font-family='"Liberation Sans","Noto Sans CJK SC",sans-serif' font-weight="bold">沪</text>
<text x="25.4" y="764.3" fill="#008c00" font-size="12" font-family='"Liberation Sans","Noto Sans CJK SC",sans-serif' font-weight="bold" textLength="43" lengthAdjust="spacingAndGlyphs">2896.26</text>
<text x="86.3" y="764.3" fill="#008c00" font-size="12" font-family='"Liberation Sans","Noto Sans CJK SC",sans-serif' font-weight="bold" textLength="34.2" lengthAdjust="spacingAndGlyphs">-41.37</text>
<text x="124.4" y="764.3" fill="#000" font-size="12" font-family='"Liberation Sans","Noto Sans CJK SC",sans-serif' font-weight="bold" textLength="37.5" lengthAdjust="spacingAndGlyphs">1898.2</text>
<text x="162.5" y="764.3" fill="#000" font-size="12" font-family='"Liberation Sans","Noto Sans CJK SC",sans-serif' font-weight="bold">亿</text>
<text x="189" y="764.3" fill="#0000ff" font-size="12" font-family='"Liberation Sans","Noto Sans CJK SC",sans-serif' font-weight="bold">深</text>
<text x="207" y="764.3" fill="#008c00" font-size="12" font-family='"Liberation Sans","Noto Sans CJK SC",sans-serif' font-weight="bold" textLength="49.3" lengthAdjust="spacingAndGlyphs">12705.32</text>
<text x="267.8" y="764.3" fill="#008c00" font-size="12" font-family='"Liberation Sans","Noto Sans CJK SC",sans-serif' font-weight="bold" textLength="41.8" lengthAdjust="spacingAndGlyphs">-252.97</text>
<text x="313" y="764.3" fill="#000" font-size="12" font-family='"Liberation Sans","Noto Sans CJK SC",sans-serif' font-weight="bold" textLength="37" lengthAdjust="spacingAndGlyphs">1406.2</text>
<text x="350.5" y="764.3" fill="#000" font-size="12" font-family='"Liberation Sans","Noto Sans CJK SC",sans-serif' font-weight="bold">亿</text>
<line x1="368.5" y1="753" x2="368.5" y2="767" stroke="#404048" stroke-width="1" shape-rendering="crispEdges"/>
<line x1="369.5" y1="753" x2="369.5" y2="767" stroke="#f4f4ff" stroke-width="1" shape-rendering="crispEdges"/>
<text x="371.3" y="764.5" fill="#000" font-size="12" font-family='"Liberation Sans","Noto Sans CJK SC",sans-serif' textLength="96" lengthAdjust="spacingAndGlyphs">河期货济南营业部</text>
<text x="467.3" y="764.5" fill="#000" font-size="12" font-family='"Liberation Sans","Noto Sans CJK SC",sans-serif'>3</text>
<text x="473.3" y="764.5" fill="#000" font-size="12" font-family='"Liberation Sans","Noto Sans CJK SC",sans-serif'>月</text>
<text x="485.3" y="764.5" fill="#000" font-size="12" font-family='"Liberation Sans","Noto Sans CJK SC",sans-serif' textLength="12" lengthAdjust="spacingAndGlyphs">15</text>
<text x="497.3" y="764.5" fill="#000" font-size="12" font-family='"Liberation Sans","Noto Sans CJK SC",sans-serif' textLength="60" lengthAdjust="spacingAndGlyphs">号棉花日评</text>
<clipPath id="cn"><rect x="590" y="752" width="242.5" height="16"/></clipPath>
<g clip-path="url(#cn)">
<text x="594.7" y="764.5" fill="#000" font-size="12" font-family='"Liberation Sans","Noto Sans CJK SC",sans-serif' textLength="240" lengthAdjust="spacingAndGlyphs">〖金融财经〗中国股市收于逾两周来低点，受</text>
</g>
<rect x="833.4" y="753" width="81.8" height="15" fill="#0000ff"/>
<path d="M836 764.5l5-10 5 10z" fill="#ffff00"/>
<text x="848.5" y="764.8" fill="#ffff00" font-size="13" font-family='"Liberation Sans","Noto Sans CJK SC",sans-serif' font-weight="bold">1</text>
<line x1="916" y1="753" x2="916" y2="768" stroke="#f4f4ff" stroke-width="1" shape-rendering="crispEdges"/>
<line x1="955.7" y1="753" x2="955.7" y2="768" stroke="#f4f4ff" stroke-width="1" shape-rendering="crispEdges"/>
<line x1="987.5" y1="753" x2="987.5" y2="768" stroke="#f4f4ff" stroke-width="1" shape-rendering="crispEdges"/>
<text x="919" y="764.5" fill="#e01010" font-size="14" font-family='"Liberation Sans","Noto Sans CJK SC",sans-serif' font-weight="bold">p</text>
<text x="927.3" y="764.5" fill="#1818d0" font-size="14" font-family='"Liberation Sans","Noto Sans CJK SC",sans-serif' font-weight="bold" textLength="23" lengthAdjust="spacingAndGlyphs">obo</text>
<path d="M961.5 755.5h8l-4 4.5zM965.5 759v7" fill="#2030c8" stroke="#2030c8" stroke-width="1.6"/>
<rect x="971.5" y="763" width="2" height="3" fill="#2030c8"/><rect x="975" y="760" width="2" height="6" fill="#2030c8"/><rect x="978.5" y="756" width="2" height="10" fill="#2030c8"/>
<text x="988.6" y="765" fill="#2030c8" font-size="14" font-family='"Liberation Sans","Noto Sans CJK SC",sans-serif' textLength="32" lengthAdjust="spacingAndGlyphs">16:44</text>
</svg>
</body></html>
